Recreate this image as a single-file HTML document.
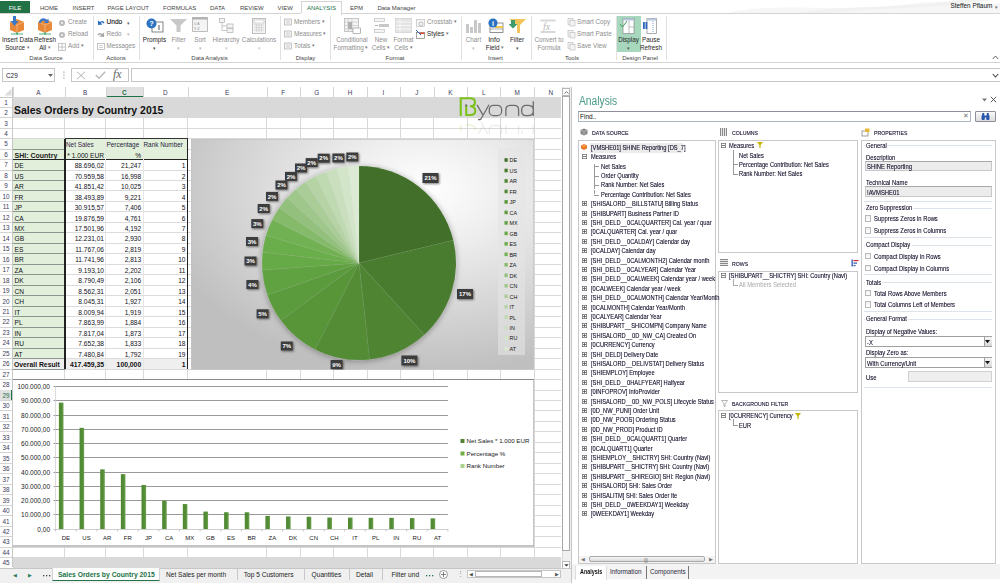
<!DOCTYPE html><html><head><meta charset="utf-8"><style>
*{margin:0;padding:0;box-sizing:border-box}
html,body{width:1000px;height:583px;overflow:hidden;background:#fff;font-family:"Liberation Sans",sans-serif;}
.t{position:absolute;white-space:nowrap;font-size:7px;line-height:8px;color:#222;}
</style></head><body>
<div style="position:absolute;left:0px;top:0px;width:1000px;height:14px;background:#fff"></div>
<svg style="position:absolute;left:600px;top:0" width="400" height="14"><path d="M130 12 C180 2 240 13 300 5 S360 10 400 3 L400 13 L130 13Z" fill="#f6f6f6"/><path d="M200 13 C240 5 300 9 360 0 L390 0 C330 10 270 7 230 13Z" fill="#f1f1f1"/></svg>
<div style="position:absolute;left:0px;top:1px;width:30px;height:13px;background:#217346"></div>
<div class="t" style="left:0px;top:3.5px;width:30px;text-align:center;color:#fff;font-size:6px;">FILE</div>
<div class="t" style="left:40px;top:3.5px;color:#444;font-size:6px;">HOME</div>
<div class="t" style="left:72.5px;top:3.5px;color:#444;font-size:6px;">INSERT</div>
<div class="t" style="left:107.5px;top:3.5px;color:#444;font-size:6px;">PAGE LAYOUT</div>
<div class="t" style="left:163px;top:3.5px;color:#444;font-size:6px;">FORMULAS</div>
<div class="t" style="left:210px;top:3.5px;color:#444;font-size:6px;">DATA</div>
<div class="t" style="left:240px;top:3.5px;color:#444;font-size:6px;">REVIEW</div>
<div class="t" style="left:277.5px;top:3.5px;color:#444;font-size:6px;">VIEW</div>
<div class="t" style="left:307px;top:3.5px;color:#217346;font-size:6px;">ANALYSIS</div>
<div class="t" style="left:350px;top:3.5px;color:#444;font-size:6px;">EPM</div>
<div class="t" style="left:377.5px;top:3.5px;color:#444;font-size:6px;">Data Manager</div>
<div style="position:absolute;left:300.5px;top:1px;width:41px;height:14px;border:1px solid #d4d4d4;border-bottom:none;background:#fff"></div>
<div class="t" style="left:307px;top:3.5px;color:#217346;font-size:6px;">ANALYSIS</div>
<div class="t" style="left:950.5px;top:2.2px;color:#111;font-size:6.4px;">Steffen Pflaum</div>
<div class="t" style="left:995px;top:2.5px;color:#666;font-size:5px;">&#9662;</div>
<div style="position:absolute;left:0px;top:13.3px;width:1000px;height:0.8px;background:#d4d4d4"></div>
<div style="position:absolute;left:301.3px;top:13px;width:39.5px;height:1.5px;background:#fff"></div>
<div style="position:absolute;left:0px;top:62px;width:1000px;height:1px;background:#d4d4d4"></div>
<div style="position:absolute;left:92.5px;top:16px;width:0.7px;height:44px;background:#e1e1e1"></div>
<div style="position:absolute;left:139.3px;top:16px;width:0.7px;height:44px;background:#e1e1e1"></div>
<div style="position:absolute;left:279.5px;top:16px;width:0.7px;height:44px;background:#e1e1e1"></div>
<div style="position:absolute;left:330.4px;top:16px;width:0.7px;height:44px;background:#e1e1e1"></div>
<div style="position:absolute;left:460.6px;top:16px;width:0.7px;height:44px;background:#e1e1e1"></div>
<div style="position:absolute;left:530.7px;top:16px;width:0.7px;height:44px;background:#e1e1e1"></div>
<div style="position:absolute;left:615.5px;top:16px;width:0.7px;height:44px;background:#e1e1e1"></div>
<div style="position:absolute;left:665.7px;top:16px;width:0.7px;height:44px;background:#e1e1e1"></div>
<div class="t" style="left:6px;top:54.3px;width:80px;text-align:center;font-size:6px;color:#444;">Data Source</div>
<div class="t" style="left:76px;top:54.3px;width:80px;text-align:center;font-size:6px;color:#444;">Actions</div>
<div class="t" style="left:169.5px;top:54.3px;width:80px;text-align:center;font-size:6px;color:#444;">Data Analysis</div>
<div class="t" style="left:265.5px;top:54.3px;width:80px;text-align:center;font-size:6px;color:#444;">Display</div>
<div class="t" style="left:355px;top:54.3px;width:80px;text-align:center;font-size:6px;color:#444;">Format</div>
<div class="t" style="left:455.5px;top:54.3px;width:80px;text-align:center;font-size:6px;color:#444;">Insert</div>
<div class="t" style="left:532px;top:54.3px;width:80px;text-align:center;font-size:6px;color:#444;">Tools</div>
<div class="t" style="left:600px;top:54.3px;width:80px;text-align:center;font-size:6px;color:#444;">Design Panel</div>
<svg style="position:absolute;left:8.5px;top:16px" width="16" height="19" viewBox="0 0 16 19"><path d="M8 3 L15 6 L15 14 L8 17 L1 14 L1 6Z" fill="#e8893a"/><path d="M1 6 L8 9 L15 6 M8 9 L8 17" stroke="#f7c89a" stroke-width="0.6" fill="none"/><rect x="2" y="17.5" width="12" height="1" fill="#4caf80"/><rect x="7" y="16.5" width="2" height="2" fill="#4caf80"/><path d="M4 0 L7 0 L7 5 L9.5 5 L5.5 10 L1.5 5 L4 5Z" fill="#3a78c8"/></svg>
<svg style="position:absolute;left:36.5px;top:16px" width="16" height="19" viewBox="0 0 16 19"><path d="M8 3 L15 6 L15 14 L8 17 L1 14 L1 6Z" fill="#e8893a"/><path d="M1 6 L8 9 L15 6 M8 9 L8 17" stroke="#f7c89a" stroke-width="0.6" fill="none"/><rect x="2" y="17.5" width="12" height="1" fill="#4caf80"/><rect x="7" y="16.5" width="2" height="2" fill="#4caf80"/><path d="M2 7 A4.5 4.5 0 0 1 10 4 L11.5 2.5 L11.5 7 L7 7 L8.5 5.5 A3 3 0 0 0 3.5 7.5Z" fill="#3a78c8"/></svg>
<div class="t" style="left:-22.5px;top:35.7px;width:80px;text-align:center;font-size:6.3px;color:#262626;">Insert Data</div>
<div class="t" style="left:-22.5px;top:43.7px;width:80px;text-align:center;font-size:6.3px;color:#262626;">Source <span style="font-size:4.5px;color:#777;vertical-align:1px">&#9662;</span></div>
<div class="t" style="left:5px;top:35.7px;width:80px;text-align:center;font-size:6.3px;color:#262626;">Refresh</div>
<div class="t" style="left:5px;top:43.7px;width:80px;text-align:center;font-size:6.3px;color:#262626;">All <span style="font-size:4.5px;color:#777;vertical-align:1px">&#9662;</span></div>
<svg style="position:absolute;left:58px;top:18.5px" width="8" height="8" viewBox="0 0 8 8"><circle cx="4" cy="4" r="3" fill="#b8b8b8"/><circle cx="4" cy="4" r="1.2" fill="#e8e8e8"/></svg>
<div class="t" style="left:68px;top:18px;font-size:6.3px;color:#8e8e8e;">Create</div>
<svg style="position:absolute;left:58px;top:30.5px" width="8" height="8" viewBox="0 0 8 8"><circle cx="4" cy="4" r="3" fill="#b8b8b8"/><circle cx="4" cy="4" r="1.2" fill="#e8e8e8"/></svg>
<div class="t" style="left:68px;top:30px;font-size:6.3px;color:#8e8e8e;">Reload</div>
<svg style="position:absolute;left:58px;top:42.5px" width="8" height="8" viewBox="0 0 8 8"><rect x="0.5" y="0.5" width="7" height="7" fill="none" stroke="#b8b8b8" stroke-width="0.8"/><path d="M4 1 V7 M1 4 H7" stroke="#b8b8b8" stroke-width="0.8"/></svg>
<div class="t" style="left:68px;top:42px;font-size:6.3px;color:#8e8e8e;">Add <span style="font-size:4.5px;color:#777;vertical-align:1px">&#9662;</span></div>
<svg style="position:absolute;left:97px;top:19px" width="8" height="7" viewBox="0 0 8 7"><path d="M1 6 L1 1.5 L3 3 C5 1 7 2 7.5 4 L6 4.5 C5.5 3 4.5 3 4 4 L5.5 5.5Z" fill="#2a6ec0"/></svg>
<div class="t" style="left:106.5px;top:18px;font-size:6.6px;color:#111;-webkit-text-stroke:0.1px #111;">Undo</div>
<div class="t" style="left:127px;top:18.5px;font-size:5px;color:#666;">&#9662;</div>
<svg style="position:absolute;left:97px;top:31px" width="8" height="7" viewBox="0 0 8 7"><path d="M7 6 L7 1.5 L5 3 C3 1 1 2 0.5 4 L2 4.5 C2.5 3 3.5 3 4 4 L2.5 5.5Z" fill="#a8a8a8"/></svg>
<div class="t" style="left:106.5px;top:30px;font-size:6.3px;color:#8e8e8e;">Redo</div>
<div class="t" style="left:126.5px;top:30px;font-size:5px;color:#bbb;">&#9662;</div>
<svg style="position:absolute;left:97px;top:42.5px" width="8" height="8" viewBox="0 0 8 8"><rect x="0.5" y="0.5" width="7" height="6" fill="none" stroke="#b8b8b8" stroke-width="0.8"/><path d="M2 2.5 H6 M2 4.5 H6" stroke="#b8b8b8" stroke-width="0.6"/></svg>
<div class="t" style="left:106.5px;top:42px;font-size:6.3px;color:#8e8e8e;">Messages</div>
<svg style="position:absolute;left:146px;top:17.5px" width="18" height="15" viewBox="0 0 18 15"><rect x="6" y="4" width="11" height="10" fill="#fff" stroke="#666" stroke-width="0.8"/><path d="M13 7 V12" stroke="#555" stroke-width="1"/><circle cx="5.5" cy="5.5" r="5" fill="#2b73c2"/><text x="5.5" y="8.2" text-anchor="middle" font-family="Liberation Sans" font-weight="bold" font-size="7.5" fill="#fff">?</text></svg>
<div class="t" style="left:114.5px;top:35.7px;width:80px;text-align:center;font-size:6.3px;color:#262626;">Prompts</div>
<div class="t" style="left:114.5px;top:43.7px;width:80px;text-align:center;font-size:5px;color:#555;">&#9662;</div>
<svg style="position:absolute;left:170px;top:19px" width="17" height="13" viewBox="0 0 17 13"><path d="M0 0 H17 L10.5 6.5 V13 H6.5 V6.5Z" fill="#c8c8c8"/></svg>
<div class="t" style="left:138.5px;top:35.7px;width:80px;text-align:center;font-size:6.3px;color:#8e8e8e;">Filter</div>
<div class="t" style="left:138.5px;top:43.7px;width:80px;text-align:center;font-size:5px;color:#bbb;">&#9662;</div>
<svg style="position:absolute;left:192px;top:17px" width="16" height="15" viewBox="0 0 16 15"><rect x="0.5" y="0.5" width="15" height="14" fill="#f4f4f4" stroke="#b0b0b0" stroke-width="0.8"/><rect x="0.5" y="0.5" width="15" height="2" fill="#b0b0b0"/><text x="2" y="8" font-family="Liberation Sans" font-size="4" fill="#999">0 A</text><text x="2" y="13" font-family="Liberation Sans" font-size="4" fill="#999">9 Z</text></svg>
<div class="t" style="left:160px;top:35.7px;width:80px;text-align:center;font-size:6.3px;color:#8e8e8e;">Sort</div>
<div class="t" style="left:160px;top:43.7px;width:80px;text-align:center;font-size:5px;color:#bbb;">&#9662;</div>
<svg style="position:absolute;left:219px;top:17.5px" width="15" height="15" viewBox="0 0 15 15"><rect x="0.5" y="0.5" width="5" height="4" fill="#f4f4f4" stroke="#b0b0b0" stroke-width="0.7"/><rect x="8" y="6" width="6" height="4" fill="#f4f4f4" stroke="#b0b0b0" stroke-width="0.7"/><rect x="8" y="10.5" width="6" height="4" fill="#f4f4f4" stroke="#b0b0b0" stroke-width="0.7"/><path d="M3 4.5 V12.5 H8 M3 8 H8" stroke="#b0b0b0" stroke-width="0.7" fill="none"/></svg>
<div class="t" style="left:186px;top:35.7px;width:80px;text-align:center;font-size:6.3px;color:#8e8e8e;">Hierarchy</div>
<div class="t" style="left:186px;top:43.7px;width:80px;text-align:center;font-size:5px;color:#ccc;">&#9662;</div>
<svg style="position:absolute;left:252px;top:17.5px" width="14" height="16" viewBox="0 0 14 16"><rect x="0.5" y="0.5" width="13" height="15" fill="#f4f4f4" stroke="#b0b0b0" stroke-width="0.8"/><rect x="2" y="2" width="10" height="3" fill="#fff" stroke="#b0b0b0" stroke-width="0.5"/><path d="M2 7 H12 M2 9.5 H12 M2 12 H12 M4.5 6 V14 M7 6 V14 M9.5 6 V14" stroke="#c8c8c8" stroke-width="0.6"/></svg>
<div class="t" style="left:219px;top:35.7px;width:80px;text-align:center;font-size:6.3px;color:#8e8e8e;">Calculations</div>
<div class="t" style="left:219px;top:43.7px;width:80px;text-align:center;font-size:5px;color:#ccc;">&#9662;</div>
<svg style="position:absolute;left:284px;top:18px" width="8" height="8" viewBox="0 0 8 8"><rect x="0.5" y="1" width="7" height="6" fill="#f4f4f4" stroke="#b0b0b0" stroke-width="0.7"/><path d="M2 3 H6 M2 5 H6" stroke="#b8b8b8" stroke-width="0.6"/></svg>
<div class="t" style="left:294px;top:18px;font-size:6.3px;color:#8e8e8e;">Members <span style="font-size:4.5px;color:#777;vertical-align:1px">&#9662;</span></div>
<svg style="position:absolute;left:284px;top:30px" width="8" height="8" viewBox="0 0 8 8"><rect x="0.5" y="1" width="7" height="6" fill="#f4f4f4" stroke="#b0b0b0" stroke-width="0.7"/><path d="M2 3 H6 M2 5 H6" stroke="#b8b8b8" stroke-width="0.6"/></svg>
<div class="t" style="left:294px;top:30px;font-size:6.3px;color:#8e8e8e;">Measures <span style="font-size:4.5px;color:#777;vertical-align:1px">&#9662;</span></div>
<svg style="position:absolute;left:284px;top:42px" width="8" height="8" viewBox="0 0 8 8"><rect x="0.5" y="1" width="7" height="6" fill="#f4f4f4" stroke="#b0b0b0" stroke-width="0.7"/><path d="M2 3 H6 M2 5 H6" stroke="#b8b8b8" stroke-width="0.6"/></svg>
<div class="t" style="left:294px;top:42px;font-size:6.3px;color:#8e8e8e;">Totals <span style="font-size:4.5px;color:#777;vertical-align:1px">&#9662;</span></div>
<svg style="position:absolute;left:344px;top:17.5px" width="17" height="16" viewBox="0 0 17 16"><rect x="0.5" y="0.5" width="14" height="13" fill="#f4f4f4" stroke="#b0b0b0" stroke-width="0.7"/><path d="M0.5 4 H14.5 M0.5 7.5 H14.5 M0.5 11 H14.5 M4 0.5 V13.5 M8 0.5 V13.5" stroke="#c0c0c0" stroke-width="0.6"/><rect x="4" y="4" width="4" height="7" fill="#b0b0b0"/><rect x="9" y="10" width="7.5" height="5.5" fill="#fff" stroke="#999" stroke-width="0.7"/></svg>
<div class="t" style="left:312px;top:35.7px;width:80px;text-align:center;font-size:6.3px;color:#8e8e8e;">Conditional</div>
<div class="t" style="left:311px;top:43.7px;width:80px;text-align:center;font-size:6.3px;color:#8e8e8e;">Formatting <span style="font-size:4.5px;color:#777;vertical-align:1px">&#9662;</span></div>
<svg style="position:absolute;left:374px;top:18px" width="15" height="15" viewBox="0 0 15 15"><rect x="0.5" y="0.5" width="10" height="3" fill="#f4f4f4" stroke="#b8b8b8" stroke-width="0.6"/><rect x="5" y="6" width="10" height="3" fill="#c8c8c8"/><rect x="0.5" y="11.5" width="10" height="3" fill="#f4f4f4" stroke="#b8b8b8" stroke-width="0.6"/><path d="M1 7.5 H4" stroke="#999" stroke-width="0.8"/></svg>
<div class="t" style="left:341px;top:35.7px;width:80px;text-align:center;font-size:6.3px;color:#8e8e8e;">New</div>
<div class="t" style="left:341px;top:43.7px;width:80px;text-align:center;font-size:6.3px;color:#8e8e8e;">Cells <span style="font-size:4.5px;color:#777;vertical-align:1px">&#9662;</span></div>
<svg style="position:absolute;left:395px;top:18px" width="17" height="15" viewBox="0 0 17 15"><rect x="0.5" y="0.5" width="16" height="14" fill="#e4e4e4" stroke="#c8c8c8" stroke-width="0.6"/><path d="M0.5 4 H16.5 M0.5 7.5 H16.5 M0.5 11 H16.5 M5 0.5 V14.5" stroke="#fafafa" stroke-width="0.8"/></svg>
<div class="t" style="left:363.5px;top:35.7px;width:80px;text-align:center;font-size:6.3px;color:#8e8e8e;">Format</div>
<div class="t" style="left:363.5px;top:43.7px;width:80px;text-align:center;font-size:6.3px;color:#8e8e8e;">Cells <span style="font-size:4.5px;color:#777;vertical-align:1px">&#9662;</span></div>
<svg style="position:absolute;left:416px;top:18.5px" width="9" height="8" viewBox="0 0 9 8"><rect x="0.5" y="0.5" width="8" height="7" fill="#f4f4f4" stroke="#b8b8b8" stroke-width="0.6"/><circle cx="5" cy="5" r="2" fill="none" stroke="#aaa" stroke-width="0.7"/></svg>
<div class="t" style="left:427px;top:18px;font-size:6.3px;color:#8e8e8e;">Crosstab <span style="font-size:4.5px;color:#777;vertical-align:1px">&#9662;</span></div>
<svg style="position:absolute;left:416px;top:29.5px" width="9" height="9" viewBox="0 0 9 9"><rect x="0.5" y="2.5" width="8" height="6" fill="#fff" stroke="#666" stroke-width="0.6"/><path d="M0 0 L5 5" stroke="#2a56b0" stroke-width="1"/><rect x="4" y="2.5" width="4.5" height="1.5" fill="#e05030"/></svg>
<div class="t" style="left:427px;top:30px;font-size:6.3px;color:#262626;">Styles <span style="font-size:4.5px;color:#777;vertical-align:1px">&#9662;</span></div>
<svg style="position:absolute;left:466px;top:18px" width="16" height="15" viewBox="0 0 16 15"><rect x="0" y="6" width="3" height="9" fill="#c8c8c8"/><rect x="4" y="9" width="3" height="6" fill="#c8c8c8"/><rect x="8" y="2" width="3" height="13" fill="#c8c8c8"/><rect x="12" y="5" width="3" height="10" fill="#c8c8c8"/></svg>
<div class="t" style="left:433.5px;top:35.7px;width:80px;text-align:center;font-size:6.3px;color:#8e8e8e;">Chart</div>
<div class="t" style="left:433.5px;top:43.7px;width:80px;text-align:center;font-size:5px;color:#bbb;">&#9662;</div>
<svg style="position:absolute;left:488px;top:17.5px" width="16" height="15" viewBox="0 0 16 15"><rect x="2" y="5" width="13" height="9.5" fill="#fff" stroke="#777" stroke-width="0.8"/><rect x="7" y="8" width="8" height="2" fill="#f0c850"/><path d="M2 11 H15" stroke="#777" stroke-width="0.6"/><circle cx="5" cy="5" r="4.6" fill="#2b73c2"/><text x="5" y="7.6" text-anchor="middle" font-family="Liberation Sans" font-weight="bold" font-size="7" fill="#fff">i</text></svg>
<div class="t" style="left:454px;top:35.7px;width:80px;text-align:center;font-size:7px;color:#262626;">Info</div>
<div class="t" style="left:455px;top:43.7px;width:80px;text-align:center;font-size:6.3px;color:#262626;">Field <span style="font-size:4.5px;color:#777;vertical-align:1px">&#9662;</span></div>
<svg style="position:absolute;left:509px;top:19px" width="17" height="14" viewBox="0 0 17 14"><path d="M0 0 H17 L11 6 V14 H8 V6Z" fill="#f2c45a"/><path d="M2 1 H6 V5 H8.5 L4 9.5 L-0.5 5 H2Z" fill="#3e9b6a"/></svg>
<div class="t" style="left:477px;top:35.7px;width:80px;text-align:center;font-size:6.3px;color:#262626;">Filter</div>
<div class="t" style="left:477px;top:43.7px;width:80px;text-align:center;font-size:5px;color:#555;">&#9662;</div>
<svg style="position:absolute;left:540px;top:17.5px" width="16" height="16" viewBox="0 0 16 16"><rect x="0.5" y="1.5" width="15" height="2" fill="#d8d8d8"/><text x="3" y="12" font-family="Liberation Serif" font-style="italic" font-size="10" fill="#b8b8b8">fx</text><rect x="0.5" y="13" width="15" height="2" fill="#d8d8d8"/></svg>
<div class="t" style="left:509px;top:35.7px;width:80px;text-align:center;font-size:6.3px;color:#8e8e8e;">Convert to</div>
<div class="t" style="left:509px;top:43.7px;width:80px;text-align:center;font-size:6.3px;color:#8e8e8e;">Formula</div>
<svg style="position:absolute;left:567px;top:18px" width="9" height="9" viewBox="0 0 9 9"><rect x="1" y="0.5" width="5" height="6" fill="#f4f4f4" stroke="#b8b8b8" stroke-width="0.6"/><rect x="3" y="2.5" width="5" height="5.5" fill="#f4f4f4" stroke="#b8b8b8" stroke-width="0.6"/></svg>
<div class="t" style="left:577px;top:18px;font-size:6.3px;color:#8e8e8e;">Smart Copy</div>
<svg style="position:absolute;left:567px;top:30px" width="9" height="9" viewBox="0 0 9 9"><rect x="1" y="0.5" width="5" height="6" fill="#f4f4f4" stroke="#b8b8b8" stroke-width="0.6"/><rect x="3" y="2.5" width="5" height="5.5" fill="#f4f4f4" stroke="#b8b8b8" stroke-width="0.6"/></svg>
<div class="t" style="left:577px;top:30px;font-size:6.3px;color:#8e8e8e;">Smart Paste</div>
<svg style="position:absolute;left:567px;top:42px" width="9" height="9" viewBox="0 0 9 9"><rect x="1" y="0.5" width="5" height="6" fill="#f4f4f4" stroke="#b8b8b8" stroke-width="0.6"/><rect x="3" y="2.5" width="5" height="5.5" fill="#f4f4f4" stroke="#b8b8b8" stroke-width="0.6"/></svg>
<div class="t" style="left:577px;top:42px;font-size:6.3px;color:#8e8e8e;">Save View</div>
<div style="position:absolute;left:617px;top:15.7px;width:23.5px;height:36px;background:#a7d8bd"></div>
<svg style="position:absolute;left:620px;top:17.5px" width="15" height="16" viewBox="0 0 15 16"><rect x="3" y="0.5" width="11" height="15" fill="#fff" stroke="#888" stroke-width="0.7"/><rect x="3" y="0.5" width="11" height="2" fill="#b8c8e0"/><path d="M9 2.5 V15.5 M9 9 H14" stroke="#999" stroke-width="0.6"/><path d="M0 6 L2.5 9 L7 3" stroke="#3a9a5a" stroke-width="1" fill="none"/></svg>
<div class="t" style="left:588.5px;top:35.7px;width:80px;text-align:center;font-size:6.3px;color:#262626;">Display</div>
<div class="t" style="left:588.5px;top:43.7px;width:80px;text-align:center;font-size:5px;color:#555;">&#9662;</div>
<svg style="position:absolute;left:643px;top:17.5px" width="14" height="16" viewBox="0 0 14 16"><rect x="4" y="0.5" width="9.5" height="15" fill="#fff" stroke="#888" stroke-width="0.7"/><rect x="4" y="0.5" width="9.5" height="2" fill="#b8c8e0"/><rect x="0" y="4" width="1.8" height="7" fill="#2a66c0"/><rect x="2.5" y="4" width="1.8" height="7" fill="#2a66c0"/><path d="M10 3 V14" stroke="#2a66c0" stroke-width="0.6" stroke-dasharray="1 1"/></svg>
<div class="t" style="left:611px;top:35.7px;width:80px;text-align:center;font-size:6.3px;color:#262626;">Pause</div>
<div class="t" style="left:611px;top:43.7px;width:80px;text-align:center;font-size:6.3px;color:#262626;">Refresh</div>
<svg style="position:absolute;left:992px;top:55px" width="7" height="5" viewBox="0 0 7 5"><path d="M0.8 4 L3.5 1 L6.2 4" stroke="#555" stroke-width="0.9" fill="none"/></svg>
<div style="position:absolute;left:0px;top:63px;width:1000px;height:24px;background:#fff"></div>
<div style="position:absolute;left:2px;top:68px;width:53px;height:14px;border:1px solid #c6c6c6;background:#fff"></div>
<div class="t" style="left:6px;top:71.5px;color:#223;font-size:6.4px;">C29</div>
<svg style="position:absolute;left:47.5px;top:74px" width="5" height="3" viewBox="0 0 5 3"><path d="M0 0 H5 L2.5 3Z" fill="#666"/></svg>
<svg style="position:absolute;left:62.5px;top:71px" width="2" height="8" viewBox="0 0 2 8"><rect x="0.3" y="0.5" width="1.2" height="1.2" fill="#999"/><rect x="0.3" y="3.4" width="1.2" height="1.2" fill="#999"/><rect x="0.3" y="6.3" width="1.2" height="1.2" fill="#999"/></svg>
<div style="position:absolute;left:71px;top:68px;width:58px;height:14px;border:1px solid #c6c6c6;background:#fff"></div>
<svg style="position:absolute;left:75.5px;top:70.5px" width="10" height="9" viewBox="0 0 10 9"><path d="M1 0.8 L9 8.2 M9 0.8 L1 8.2" stroke="#b0b0b0" stroke-width="1"/></svg>
<svg style="position:absolute;left:94.5px;top:70.5px" width="11" height="8" viewBox="0 0 11 8"><path d="M0.8 4 L4 7.2 L10.2 0.8" stroke="#b8b8b8" stroke-width="1.4" fill="none"/></svg>
<div class="t" style="left:113px;top:68px;font-family:'Liberation Serif',serif;font-style:italic;font-size:12px;line-height:13px;color:#666;">fx</div>
<div style="position:absolute;left:130.5px;top:68px;width:875px;height:14px;border:1px solid #c6c6c6;background:#fff"></div>
<svg style="position:absolute;left:992px;top:73px" width="7" height="5" viewBox="0 0 7 5"><path d="M0.8 1 L3.5 4 L6.2 1" stroke="#444" stroke-width="1.1" fill="none"/></svg>
<div style="position:absolute;left:0px;top:87px;width:560.5px;height:10px;background:#fff"></div>
<div class="t" style="left:12.5px;top:88.8px;width:52.0px;text-align:center;color:#3a3a5a;font-size:6.4px;">A</div>
<div style="position:absolute;left:12.5px;top:87px;width:1px;height:10px;background:#d4d4d4"></div>
<div class="t" style="left:64.5px;top:88.8px;width:41.2px;text-align:center;color:#3a3a5a;font-size:6.4px;">B</div>
<div style="position:absolute;left:64.5px;top:87px;width:1px;height:10px;background:#d4d4d4"></div>
<div style="position:absolute;left:105.7px;top:87px;width:37.3px;height:10px;background:#e1e1e1;border-bottom:1px solid #217346"></div>
<div class="t" style="left:105.7px;top:88.8px;width:37.3px;text-align:center;color:#217346;font-size:6.4px;font-weight:bold;">C</div>
<div style="position:absolute;left:105.7px;top:87px;width:1px;height:10px;background:#d4d4d4"></div>
<div class="t" style="left:143px;top:88.8px;width:44.5px;text-align:center;color:#3a3a5a;font-size:6.4px;">D</div>
<div style="position:absolute;left:143px;top:87px;width:1px;height:10px;background:#d4d4d4"></div>
<div class="t" style="left:187.5px;top:88.8px;width:79.10000000000002px;text-align:center;color:#3a3a5a;font-size:6.4px;">E</div>
<div style="position:absolute;left:187.5px;top:87px;width:1px;height:10px;background:#d4d4d4"></div>
<div class="t" style="left:266.6px;top:88.8px;width:33.39999999999998px;text-align:center;color:#3a3a5a;font-size:6.4px;">F</div>
<div style="position:absolute;left:266.6px;top:87px;width:1px;height:10px;background:#d4d4d4"></div>
<div class="t" style="left:300px;top:88.8px;width:33.39999999999998px;text-align:center;color:#3a3a5a;font-size:6.4px;">G</div>
<div style="position:absolute;left:300px;top:87px;width:1px;height:10px;background:#d4d4d4"></div>
<div class="t" style="left:333.4px;top:88.8px;width:33.400000000000034px;text-align:center;color:#3a3a5a;font-size:6.4px;">H</div>
<div style="position:absolute;left:333.4px;top:87px;width:1px;height:10px;background:#d4d4d4"></div>
<div class="t" style="left:366.8px;top:88.8px;width:33.39999999999998px;text-align:center;color:#3a3a5a;font-size:6.4px;">I</div>
<div style="position:absolute;left:366.8px;top:87px;width:1px;height:10px;background:#d4d4d4"></div>
<div class="t" style="left:400.2px;top:88.8px;width:33.400000000000034px;text-align:center;color:#3a3a5a;font-size:6.4px;">J</div>
<div style="position:absolute;left:400.2px;top:87px;width:1px;height:10px;background:#d4d4d4"></div>
<div class="t" style="left:433.6px;top:88.8px;width:33.39999999999998px;text-align:center;color:#3a3a5a;font-size:6.4px;">K</div>
<div style="position:absolute;left:433.6px;top:87px;width:1px;height:10px;background:#d4d4d4"></div>
<div class="t" style="left:467px;top:88.8px;width:33.39999999999998px;text-align:center;color:#3a3a5a;font-size:6.4px;">L</div>
<div style="position:absolute;left:467px;top:87px;width:1px;height:10px;background:#d4d4d4"></div>
<div class="t" style="left:500.4px;top:88.8px;width:33.39999999999998px;text-align:center;color:#3a3a5a;font-size:6.4px;">M</div>
<div style="position:absolute;left:500.4px;top:87px;width:1px;height:10px;background:#d4d4d4"></div>
<div class="t" style="left:533.8px;top:88.8px;width:34.200000000000045px;text-align:center;color:#3a3a5a;font-size:6.4px;">N</div>
<div style="position:absolute;left:533.8px;top:87px;width:1px;height:10px;background:#d4d4d4"></div>
<div style="position:absolute;left:0px;top:96.5px;width:560.5px;height:0.7px;background:#c8c8c8"></div>
<svg style="position:absolute;left:4px;top:88px" width="8" height="8" viewBox="0 0 8 8"><path d="M7.5 0.5 L7.5 7.5 L0.5 7.5Z" fill="#dcdcdc"/></svg>
<div class="t" style="left:0px;top:98.6px;width:12px;text-align:center;color:#3a3a5a;font-size:6.4px;">1</div>
<div style="position:absolute;left:0px;top:106.75px;width:12.5px;height:0.6px;background:#d4d4d4"></div>
<div class="t" style="left:0px;top:109.05px;width:12px;text-align:center;color:#3a3a5a;font-size:6.4px;">2</div>
<div style="position:absolute;left:0px;top:117.19999999999999px;width:12.5px;height:0.6px;background:#d4d4d4"></div>
<div class="t" style="left:0px;top:119.49999999999999px;width:12px;text-align:center;color:#3a3a5a;font-size:6.4px;">3</div>
<div style="position:absolute;left:0px;top:127.65px;width:12.5px;height:0.6px;background:#d4d4d4"></div>
<div class="t" style="left:0px;top:129.95000000000002px;width:12px;text-align:center;color:#3a3a5a;font-size:6.4px;">4</div>
<div style="position:absolute;left:0px;top:138.1px;width:12.5px;height:0.6px;background:#d4d4d4"></div>
<div class="t" style="left:0px;top:140.4px;width:12px;text-align:center;color:#3a3a5a;font-size:6.4px;">5</div>
<div style="position:absolute;left:0px;top:148.575px;width:12.5px;height:0.6px;background:#d4d4d4"></div>
<div class="t" style="left:0px;top:150.875px;width:12px;text-align:center;color:#3a3a5a;font-size:6.4px;">6</div>
<div style="position:absolute;left:0px;top:159.04999999999998px;width:12.5px;height:0.6px;background:#d4d4d4"></div>
<div class="t" style="left:0px;top:161.35px;width:12px;text-align:center;color:#3a3a5a;font-size:6.4px;">7</div>
<div style="position:absolute;left:0px;top:169.52499999999998px;width:12.5px;height:0.6px;background:#d4d4d4"></div>
<div class="t" style="left:0px;top:171.825px;width:12px;text-align:center;color:#3a3a5a;font-size:6.4px;">8</div>
<div style="position:absolute;left:0px;top:180.0px;width:12.5px;height:0.6px;background:#d4d4d4"></div>
<div class="t" style="left:0px;top:182.3px;width:12px;text-align:center;color:#3a3a5a;font-size:6.4px;">9</div>
<div style="position:absolute;left:0px;top:190.475px;width:12.5px;height:0.6px;background:#d4d4d4"></div>
<div class="t" style="left:0px;top:192.775px;width:12px;text-align:center;color:#3a3a5a;font-size:6.4px;">10</div>
<div style="position:absolute;left:0px;top:200.95px;width:12.5px;height:0.6px;background:#d4d4d4"></div>
<div class="t" style="left:0px;top:203.25px;width:12px;text-align:center;color:#3a3a5a;font-size:6.4px;">11</div>
<div style="position:absolute;left:0px;top:211.425px;width:12.5px;height:0.6px;background:#d4d4d4"></div>
<div class="t" style="left:0px;top:213.72500000000002px;width:12px;text-align:center;color:#3a3a5a;font-size:6.4px;">12</div>
<div style="position:absolute;left:0px;top:221.89999999999998px;width:12.5px;height:0.6px;background:#d4d4d4"></div>
<div class="t" style="left:0px;top:224.2px;width:12px;text-align:center;color:#3a3a5a;font-size:6.4px;">13</div>
<div style="position:absolute;left:0px;top:232.375px;width:12.5px;height:0.6px;background:#d4d4d4"></div>
<div class="t" style="left:0px;top:234.675px;width:12px;text-align:center;color:#3a3a5a;font-size:6.4px;">14</div>
<div style="position:absolute;left:0px;top:242.85px;width:12.5px;height:0.6px;background:#d4d4d4"></div>
<div class="t" style="left:0px;top:245.15px;width:12px;text-align:center;color:#3a3a5a;font-size:6.4px;">15</div>
<div style="position:absolute;left:0px;top:253.325px;width:12.5px;height:0.6px;background:#d4d4d4"></div>
<div class="t" style="left:0px;top:255.625px;width:12px;text-align:center;color:#3a3a5a;font-size:6.4px;">16</div>
<div style="position:absolute;left:0px;top:263.79999999999995px;width:12.5px;height:0.6px;background:#d4d4d4"></div>
<div class="t" style="left:0px;top:266.09999999999997px;width:12px;text-align:center;color:#3a3a5a;font-size:6.4px;">17</div>
<div style="position:absolute;left:0px;top:274.275px;width:12.5px;height:0.6px;background:#d4d4d4"></div>
<div class="t" style="left:0px;top:276.575px;width:12px;text-align:center;color:#3a3a5a;font-size:6.4px;">18</div>
<div style="position:absolute;left:0px;top:284.75px;width:12.5px;height:0.6px;background:#d4d4d4"></div>
<div class="t" style="left:0px;top:287.05px;width:12px;text-align:center;color:#3a3a5a;font-size:6.4px;">19</div>
<div style="position:absolute;left:0px;top:295.225px;width:12.5px;height:0.6px;background:#d4d4d4"></div>
<div class="t" style="left:0px;top:297.52500000000003px;width:12px;text-align:center;color:#3a3a5a;font-size:6.4px;">20</div>
<div style="position:absolute;left:0px;top:305.7px;width:12.5px;height:0.6px;background:#d4d4d4"></div>
<div class="t" style="left:0px;top:308.0px;width:12px;text-align:center;color:#3a3a5a;font-size:6.4px;">21</div>
<div style="position:absolute;left:0px;top:316.17499999999995px;width:12.5px;height:0.6px;background:#d4d4d4"></div>
<div class="t" style="left:0px;top:318.47499999999997px;width:12px;text-align:center;color:#3a3a5a;font-size:6.4px;">22</div>
<div style="position:absolute;left:0px;top:326.65px;width:12.5px;height:0.6px;background:#d4d4d4"></div>
<div class="t" style="left:0px;top:328.95px;width:12px;text-align:center;color:#3a3a5a;font-size:6.4px;">23</div>
<div style="position:absolute;left:0px;top:337.125px;width:12.5px;height:0.6px;background:#d4d4d4"></div>
<div class="t" style="left:0px;top:339.425px;width:12px;text-align:center;color:#3a3a5a;font-size:6.4px;">24</div>
<div style="position:absolute;left:0px;top:347.6px;width:12.5px;height:0.6px;background:#d4d4d4"></div>
<div class="t" style="left:0px;top:349.90000000000003px;width:12px;text-align:center;color:#3a3a5a;font-size:6.4px;">25</div>
<div style="position:absolute;left:0px;top:358.075px;width:12.5px;height:0.6px;background:#d4d4d4"></div>
<div class="t" style="left:0px;top:360.375px;width:12px;text-align:center;color:#3a3a5a;font-size:6.4px;">26</div>
<div style="position:absolute;left:0px;top:368.54999999999995px;width:12.5px;height:0.6px;background:#d4d4d4"></div>
<div class="t" style="left:0px;top:370.84999999999997px;width:12px;text-align:center;color:#3a3a5a;font-size:6.4px;">27</div>
<div style="position:absolute;left:0px;top:379.025px;width:12.5px;height:0.6px;background:#d4d4d4"></div>
<div class="t" style="left:0px;top:381.325px;width:12px;text-align:center;color:#3a3a5a;font-size:6.4px;">28</div>
<div style="position:absolute;left:0px;top:389.5px;width:12.5px;height:0.6px;background:#d4d4d4"></div>
<div style="position:absolute;left:0px;top:390.0px;width:12px;height:10.44px;background:#e1e1e1;border-right:1px solid #217346"></div>
<div class="t" style="left:0px;top:391.8px;width:12px;text-align:center;color:#217346;font-size:6.4px;">29</div>
<div style="position:absolute;left:0px;top:399.975px;width:12.5px;height:0.6px;background:#d4d4d4"></div>
<div class="t" style="left:0px;top:402.27500000000003px;width:12px;text-align:center;color:#3a3a5a;font-size:6.4px;">30</div>
<div style="position:absolute;left:0px;top:410.44999999999993px;width:12.5px;height:0.6px;background:#d4d4d4"></div>
<div class="t" style="left:0px;top:412.74999999999994px;width:12px;text-align:center;color:#3a3a5a;font-size:6.4px;">31</div>
<div style="position:absolute;left:0px;top:420.92499999999995px;width:12.5px;height:0.6px;background:#d4d4d4"></div>
<div class="t" style="left:0px;top:423.22499999999997px;width:12px;text-align:center;color:#3a3a5a;font-size:6.4px;">32</div>
<div style="position:absolute;left:0px;top:431.4px;width:12.5px;height:0.6px;background:#d4d4d4"></div>
<div class="t" style="left:0px;top:433.7px;width:12px;text-align:center;color:#3a3a5a;font-size:6.4px;">33</div>
<div style="position:absolute;left:0px;top:441.875px;width:12.5px;height:0.6px;background:#d4d4d4"></div>
<div class="t" style="left:0px;top:444.175px;width:12px;text-align:center;color:#3a3a5a;font-size:6.4px;">34</div>
<div style="position:absolute;left:0px;top:452.35px;width:12.5px;height:0.6px;background:#d4d4d4"></div>
<div class="t" style="left:0px;top:454.65000000000003px;width:12px;text-align:center;color:#3a3a5a;font-size:6.4px;">35</div>
<div style="position:absolute;left:0px;top:462.82499999999993px;width:12.5px;height:0.6px;background:#d4d4d4"></div>
<div class="t" style="left:0px;top:465.12499999999994px;width:12px;text-align:center;color:#3a3a5a;font-size:6.4px;">36</div>
<div style="position:absolute;left:0px;top:473.29999999999995px;width:12.5px;height:0.6px;background:#d4d4d4"></div>
<div class="t" style="left:0px;top:475.59999999999997px;width:12px;text-align:center;color:#3a3a5a;font-size:6.4px;">37</div>
<div style="position:absolute;left:0px;top:483.775px;width:12.5px;height:0.6px;background:#d4d4d4"></div>
<div class="t" style="left:0px;top:486.075px;width:12px;text-align:center;color:#3a3a5a;font-size:6.4px;">38</div>
<div style="position:absolute;left:0px;top:494.25px;width:12.5px;height:0.6px;background:#d4d4d4"></div>
<div class="t" style="left:0px;top:496.55px;width:12px;text-align:center;color:#3a3a5a;font-size:6.4px;">39</div>
<div style="position:absolute;left:0px;top:504.725px;width:12.5px;height:0.6px;background:#d4d4d4"></div>
<div class="t" style="left:0px;top:507.02500000000003px;width:12px;text-align:center;color:#3a3a5a;font-size:6.4px;">40</div>
<div style="position:absolute;left:0px;top:515.1999999999999px;width:12.5px;height:0.6px;background:#d4d4d4"></div>
<div class="t" style="left:0px;top:517.4999999999999px;width:12px;text-align:center;color:#3a3a5a;font-size:6.4px;">41</div>
<div style="position:absolute;left:0px;top:525.675px;width:12.5px;height:0.6px;background:#d4d4d4"></div>
<div class="t" style="left:0px;top:527.9749999999999px;width:12px;text-align:center;color:#3a3a5a;font-size:6.4px;">42</div>
<div style="position:absolute;left:0px;top:536.15px;width:12.5px;height:0.6px;background:#d4d4d4"></div>
<div class="t" style="left:0px;top:538.4499999999999px;width:12px;text-align:center;color:#3a3a5a;font-size:6.4px;">43</div>
<div style="position:absolute;left:0px;top:546.625px;width:12.5px;height:0.6px;background:#d4d4d4"></div>
<div class="t" style="left:0px;top:548.925px;width:12px;text-align:center;color:#3a3a5a;font-size:6.4px;">44</div>
<div style="position:absolute;left:0px;top:557.1px;width:12.5px;height:0.6px;background:#d4d4d4"></div>
<div class="t" style="left:0px;top:559.4px;width:12px;text-align:center;color:#3a3a5a;font-size:6.4px;">45</div>
<div style="position:absolute;left:0px;top:567.5749999999999px;width:12.5px;height:0.6px;background:#d4d4d4"></div>
<div style="position:absolute;left:12px;top:87px;width:0.8px;height:480px;background:#c8c8c8"></div>
<div style="position:absolute;left:12.5px;top:106.75px;width:548.0px;height:0.7px;background:#d9d9d9"></div>
<div style="position:absolute;left:12.5px;top:117.19999999999999px;width:548.0px;height:0.7px;background:#d9d9d9"></div>
<div style="position:absolute;left:12.5px;top:127.65px;width:548.0px;height:0.7px;background:#d9d9d9"></div>
<div style="position:absolute;left:12.5px;top:138.1px;width:548.0px;height:0.7px;background:#d9d9d9"></div>
<div style="position:absolute;left:12.5px;top:148.575px;width:548.0px;height:0.7px;background:#d9d9d9"></div>
<div style="position:absolute;left:12.5px;top:159.04999999999998px;width:548.0px;height:0.7px;background:#d9d9d9"></div>
<div style="position:absolute;left:12.5px;top:169.52499999999998px;width:548.0px;height:0.7px;background:#d9d9d9"></div>
<div style="position:absolute;left:12.5px;top:180.0px;width:548.0px;height:0.7px;background:#d9d9d9"></div>
<div style="position:absolute;left:12.5px;top:190.475px;width:548.0px;height:0.7px;background:#d9d9d9"></div>
<div style="position:absolute;left:12.5px;top:200.95px;width:548.0px;height:0.7px;background:#d9d9d9"></div>
<div style="position:absolute;left:12.5px;top:211.425px;width:548.0px;height:0.7px;background:#d9d9d9"></div>
<div style="position:absolute;left:12.5px;top:221.89999999999998px;width:548.0px;height:0.7px;background:#d9d9d9"></div>
<div style="position:absolute;left:12.5px;top:232.375px;width:548.0px;height:0.7px;background:#d9d9d9"></div>
<div style="position:absolute;left:12.5px;top:242.85px;width:548.0px;height:0.7px;background:#d9d9d9"></div>
<div style="position:absolute;left:12.5px;top:253.325px;width:548.0px;height:0.7px;background:#d9d9d9"></div>
<div style="position:absolute;left:12.5px;top:263.79999999999995px;width:548.0px;height:0.7px;background:#d9d9d9"></div>
<div style="position:absolute;left:12.5px;top:274.275px;width:548.0px;height:0.7px;background:#d9d9d9"></div>
<div style="position:absolute;left:12.5px;top:284.75px;width:548.0px;height:0.7px;background:#d9d9d9"></div>
<div style="position:absolute;left:12.5px;top:295.225px;width:548.0px;height:0.7px;background:#d9d9d9"></div>
<div style="position:absolute;left:12.5px;top:305.7px;width:548.0px;height:0.7px;background:#d9d9d9"></div>
<div style="position:absolute;left:12.5px;top:316.17499999999995px;width:548.0px;height:0.7px;background:#d9d9d9"></div>
<div style="position:absolute;left:12.5px;top:326.65px;width:548.0px;height:0.7px;background:#d9d9d9"></div>
<div style="position:absolute;left:12.5px;top:337.125px;width:548.0px;height:0.7px;background:#d9d9d9"></div>
<div style="position:absolute;left:12.5px;top:347.6px;width:548.0px;height:0.7px;background:#d9d9d9"></div>
<div style="position:absolute;left:12.5px;top:358.075px;width:548.0px;height:0.7px;background:#d9d9d9"></div>
<div style="position:absolute;left:12.5px;top:368.54999999999995px;width:548.0px;height:0.7px;background:#d9d9d9"></div>
<div style="position:absolute;left:12.5px;top:379.025px;width:548.0px;height:0.7px;background:#d9d9d9"></div>
<div style="position:absolute;left:12.5px;top:389.5px;width:548.0px;height:0.7px;background:#d9d9d9"></div>
<div style="position:absolute;left:12.5px;top:399.975px;width:548.0px;height:0.7px;background:#d9d9d9"></div>
<div style="position:absolute;left:12.5px;top:410.44999999999993px;width:548.0px;height:0.7px;background:#d9d9d9"></div>
<div style="position:absolute;left:12.5px;top:420.92499999999995px;width:548.0px;height:0.7px;background:#d9d9d9"></div>
<div style="position:absolute;left:12.5px;top:431.4px;width:548.0px;height:0.7px;background:#d9d9d9"></div>
<div style="position:absolute;left:12.5px;top:441.875px;width:548.0px;height:0.7px;background:#d9d9d9"></div>
<div style="position:absolute;left:12.5px;top:452.35px;width:548.0px;height:0.7px;background:#d9d9d9"></div>
<div style="position:absolute;left:12.5px;top:462.82499999999993px;width:548.0px;height:0.7px;background:#d9d9d9"></div>
<div style="position:absolute;left:12.5px;top:473.29999999999995px;width:548.0px;height:0.7px;background:#d9d9d9"></div>
<div style="position:absolute;left:12.5px;top:483.775px;width:548.0px;height:0.7px;background:#d9d9d9"></div>
<div style="position:absolute;left:12.5px;top:494.25px;width:548.0px;height:0.7px;background:#d9d9d9"></div>
<div style="position:absolute;left:12.5px;top:504.725px;width:548.0px;height:0.7px;background:#d9d9d9"></div>
<div style="position:absolute;left:12.5px;top:515.1999999999999px;width:548.0px;height:0.7px;background:#d9d9d9"></div>
<div style="position:absolute;left:12.5px;top:525.675px;width:548.0px;height:0.7px;background:#d9d9d9"></div>
<div style="position:absolute;left:12.5px;top:536.15px;width:548.0px;height:0.7px;background:#d9d9d9"></div>
<div style="position:absolute;left:12.5px;top:546.625px;width:548.0px;height:0.7px;background:#d9d9d9"></div>
<div style="position:absolute;left:12.5px;top:557.1px;width:548.0px;height:0.7px;background:#d9d9d9"></div>
<div style="position:absolute;left:12.5px;top:567.5749999999999px;width:548.0px;height:0.7px;background:#d9d9d9"></div>
<div style="position:absolute;left:64.2px;top:97px;width:0.7px;height:470px;background:#d9d9d9"></div>
<div style="position:absolute;left:105.4px;top:97px;width:0.7px;height:470px;background:#d9d9d9"></div>
<div style="position:absolute;left:142.7px;top:97px;width:0.7px;height:470px;background:#d9d9d9"></div>
<div style="position:absolute;left:187.2px;top:97px;width:0.7px;height:470px;background:#d9d9d9"></div>
<div style="position:absolute;left:266.3px;top:97px;width:0.7px;height:470px;background:#d9d9d9"></div>
<div style="position:absolute;left:299.7px;top:97px;width:0.7px;height:470px;background:#d9d9d9"></div>
<div style="position:absolute;left:333.09999999999997px;top:97px;width:0.7px;height:470px;background:#d9d9d9"></div>
<div style="position:absolute;left:366.5px;top:97px;width:0.7px;height:470px;background:#d9d9d9"></div>
<div style="position:absolute;left:399.9px;top:97px;width:0.7px;height:470px;background:#d9d9d9"></div>
<div style="position:absolute;left:433.3px;top:97px;width:0.7px;height:470px;background:#d9d9d9"></div>
<div style="position:absolute;left:466.7px;top:97px;width:0.7px;height:470px;background:#d9d9d9"></div>
<div style="position:absolute;left:500.09999999999997px;top:97px;width:0.7px;height:470px;background:#d9d9d9"></div>
<div style="position:absolute;left:533.5px;top:97px;width:0.7px;height:470px;background:#d9d9d9"></div>
<div style="position:absolute;left:12.5px;top:96.8px;width:548.0px;height:20.88px;background:#d9d9d9"></div>
<div class="t" style="left:14px;top:104px;font-size:10.5px;line-height:12px;font-weight:bold;color:#111;">Sales Orders by Country 2015</div>
<div style="position:absolute;left:12.5px;top:557.6px;width:548.0px;height:10.44px;background:#d9d9d9"></div>
<svg style="position:absolute;left:455px;top:94px" width="85" height="40" viewBox="455 94 85 40"><g fill="none" stroke-linecap="butt"><path d="M460.75 116 V98.3 H470.5 C474 98.3 475 100.5 475 102.5 C475 105 473 106.2 470 106.3 C474 106.4 475.3 108.5 475.3 111 C475.3 114 473.5 115 470 115 H466.2 V105" stroke="#7cc11c" stroke-width="2.1"/><rect x="465.2" y="104.4" width="2" height="2" fill="#707070" stroke="none"/><path d="M477 104.8 L483.2 115.3 M489 104.8 L481 119 C480.5 119.6 480 119.6 478 119.6" stroke="#6e6e6e" stroke-width="1.3"/><rect x="489.3" y="105.3" width="12.3" height="10.3" rx="4.2" stroke="#6e6e6e" stroke-width="1.3"/><path d="M505.9 116 V109.5 C505.9 106.5 507.5 105.3 510.5 105.3 H514 C517 105.3 518.6 106.5 518.6 109.5 V116" stroke="#6e6e6e" stroke-width="1.3"/><path d="M533.3 101.2 V116 M533.3 111 C533.3 114.5 531.5 115.6 528 115.6 H526 C523 115.6 521.6 114 521.6 110.5 C521.6 107 523 105.3 526 105.3 H528 C531.5 105.3 533.3 106.5 533.3 110" stroke="#6e6e6e" stroke-width="1.3"/></g><g opacity="0.12" transform="translate(0,241) scale(1,-1)" fill="none"><path d="M460.75 116 V110 M466.2 116 H470 C473.5 116 475.3 114 475.3 111" stroke="#7cc11c" stroke-width="2"/><path d="M477 104.8 L483.2 115.3 M489 104.8 L481 119" stroke="#6e6e6e" stroke-width="1.3"/><rect x="489.3" y="105.3" width="12.3" height="10.3" rx="4.2" stroke="#6e6e6e" stroke-width="1.3"/><path d="M505.9 116 V109.5 C505.9 106.5 507.5 105.3 510.5 105.3 H514 C517 105.3 518.6 106.5 518.6 109.5 V116" stroke="#6e6e6e" stroke-width="1.3"/><path d="M533.3 116 V110 M521.6 110.5 C521.6 107 523 105.3 526 105.3 H528 C531.5 105.3 533.3 106.5 533.3 110" stroke="#6e6e6e" stroke-width="1.3"/></g></svg>
<div style="position:absolute;left:12.5px;top:138.6px;width:52.0px;height:219.975px;background:#e2efda"></div>
<div style="position:absolute;left:64.5px;top:138.6px;width:123.0px;height:20.94999999999999px;background:#e2efda"></div>
<div style="position:absolute;left:64.5px;top:159.54999999999998px;width:123.0px;height:199.025px;background:#fff"></div>
<div style="position:absolute;left:12.5px;top:358.575px;width:175.0px;height:10.44px;background:#efefef"></div>
<div style="position:absolute;left:12.5px;top:148.575px;width:52.0px;height:1px;background:#8c968c"></div>
<div style="position:absolute;left:12.5px;top:159.04999999999998px;width:52.0px;height:1px;background:#8c968c"></div>
<div style="position:absolute;left:64.5px;top:159.04999999999998px;width:123.0px;height:0.8px;background:#dcdcdc"></div>
<div style="position:absolute;left:12.5px;top:169.52499999999998px;width:52.0px;height:1px;background:#8c968c"></div>
<div style="position:absolute;left:64.5px;top:169.52499999999998px;width:123.0px;height:0.8px;background:#dcdcdc"></div>
<div style="position:absolute;left:12.5px;top:180.0px;width:52.0px;height:1px;background:#8c968c"></div>
<div style="position:absolute;left:64.5px;top:180.0px;width:123.0px;height:0.8px;background:#dcdcdc"></div>
<div style="position:absolute;left:12.5px;top:190.475px;width:52.0px;height:1px;background:#8c968c"></div>
<div style="position:absolute;left:64.5px;top:190.475px;width:123.0px;height:0.8px;background:#dcdcdc"></div>
<div style="position:absolute;left:12.5px;top:200.95px;width:52.0px;height:1px;background:#8c968c"></div>
<div style="position:absolute;left:64.5px;top:200.95px;width:123.0px;height:0.8px;background:#dcdcdc"></div>
<div style="position:absolute;left:12.5px;top:211.425px;width:52.0px;height:1px;background:#8c968c"></div>
<div style="position:absolute;left:64.5px;top:211.425px;width:123.0px;height:0.8px;background:#dcdcdc"></div>
<div style="position:absolute;left:12.5px;top:221.89999999999998px;width:52.0px;height:1px;background:#8c968c"></div>
<div style="position:absolute;left:64.5px;top:221.89999999999998px;width:123.0px;height:0.8px;background:#dcdcdc"></div>
<div style="position:absolute;left:12.5px;top:232.375px;width:52.0px;height:1px;background:#8c968c"></div>
<div style="position:absolute;left:64.5px;top:232.375px;width:123.0px;height:0.8px;background:#dcdcdc"></div>
<div style="position:absolute;left:12.5px;top:242.85px;width:52.0px;height:1px;background:#8c968c"></div>
<div style="position:absolute;left:64.5px;top:242.85px;width:123.0px;height:0.8px;background:#dcdcdc"></div>
<div style="position:absolute;left:12.5px;top:253.325px;width:52.0px;height:1px;background:#8c968c"></div>
<div style="position:absolute;left:64.5px;top:253.325px;width:123.0px;height:0.8px;background:#dcdcdc"></div>
<div style="position:absolute;left:12.5px;top:263.79999999999995px;width:52.0px;height:1px;background:#8c968c"></div>
<div style="position:absolute;left:64.5px;top:263.79999999999995px;width:123.0px;height:0.8px;background:#dcdcdc"></div>
<div style="position:absolute;left:12.5px;top:274.275px;width:52.0px;height:1px;background:#8c968c"></div>
<div style="position:absolute;left:64.5px;top:274.275px;width:123.0px;height:0.8px;background:#dcdcdc"></div>
<div style="position:absolute;left:12.5px;top:284.75px;width:52.0px;height:1px;background:#8c968c"></div>
<div style="position:absolute;left:64.5px;top:284.75px;width:123.0px;height:0.8px;background:#dcdcdc"></div>
<div style="position:absolute;left:12.5px;top:295.225px;width:52.0px;height:1px;background:#8c968c"></div>
<div style="position:absolute;left:64.5px;top:295.225px;width:123.0px;height:0.8px;background:#dcdcdc"></div>
<div style="position:absolute;left:12.5px;top:305.7px;width:52.0px;height:1px;background:#8c968c"></div>
<div style="position:absolute;left:64.5px;top:305.7px;width:123.0px;height:0.8px;background:#dcdcdc"></div>
<div style="position:absolute;left:12.5px;top:316.17499999999995px;width:52.0px;height:1px;background:#8c968c"></div>
<div style="position:absolute;left:64.5px;top:316.17499999999995px;width:123.0px;height:0.8px;background:#dcdcdc"></div>
<div style="position:absolute;left:12.5px;top:326.65px;width:52.0px;height:1px;background:#8c968c"></div>
<div style="position:absolute;left:64.5px;top:326.65px;width:123.0px;height:0.8px;background:#dcdcdc"></div>
<div style="position:absolute;left:12.5px;top:337.125px;width:52.0px;height:1px;background:#8c968c"></div>
<div style="position:absolute;left:64.5px;top:337.125px;width:123.0px;height:0.8px;background:#dcdcdc"></div>
<div style="position:absolute;left:12.5px;top:347.6px;width:52.0px;height:1px;background:#8c968c"></div>
<div style="position:absolute;left:64.5px;top:347.6px;width:123.0px;height:0.8px;background:#dcdcdc"></div>
<div style="position:absolute;left:12.5px;top:358.075px;width:52.0px;height:1px;background:#8c968c"></div>
<div style="position:absolute;left:64.5px;top:358.075px;width:123.0px;height:0.8px;background:#dcdcdc"></div>
<div style="position:absolute;left:12.5px;top:368.54999999999995px;width:52.0px;height:1px;background:#8c968c"></div>
<div style="position:absolute;left:64.5px;top:368.54999999999995px;width:123.0px;height:0.8px;background:#dcdcdc"></div>
<div style="position:absolute;left:12.5px;top:158.54999999999998px;width:175.0px;height:1.6px;background:#222"></div>
<div style="position:absolute;left:64.5px;top:159.04999999999998px;width:123px;height:0.6px;background:#222"></div>
<div style="position:absolute;left:64px;top:138.6px;width:1.5px;height:230.44999999999996px;background:#222"></div>
<div style="position:absolute;left:186.5px;top:138.6px;width:1.5px;height:230.44999999999996px;background:#222"></div>
<div style="position:absolute;left:64.5px;top:138.1px;width:123px;height:1px;background:#333"></div>
<div style="position:absolute;left:105.3px;top:138.6px;width:0.8px;height:230.44999999999996px;background:#e6e6e6"></div>
<div style="position:absolute;left:142.6px;top:138.6px;width:0.8px;height:230.44999999999996px;background:#e6e6e6"></div>
<div class="t" style="left:66px;top:141.4px;font-size:6.4px;color:#1e1e3a;color:#3a1e4a">Net Sales</div>
<div class="t" style="left:106.5px;top:141.4px;font-size:6.4px;color:#1e1e3a;">Percentage</div>
<div class="t" style="left:143.5px;top:141.4px;font-size:6.4px;color:#1e1e3a;">Rank Number</div>
<div class="t" style="left:14.5px;top:151.77499999999998px;font-size:7px;font-weight:bold;color:#222;">SHI: Country</div>
<div class="t" style="left:64.5px;top:151.77499999999998px;width:39.5px;text-align:right;font-size:6.6px;color:#101020;">* 1.000 EUR</div>
<div class="t" style="left:105.7px;top:151.77499999999998px;width:35.5px;text-align:right;font-size:6.6px;color:#101020;">%</div>
<div class="t" style="left:14.5px;top:162.14999999999998px;font-size:6.6px;color:#101020;">DE</div>
<div class="t" style="left:64.5px;top:162.14999999999998px;width:39.5px;text-align:right;font-size:6.6px;color:#101020;">88.696,02</div>
<div class="t" style="left:105.7px;top:162.14999999999998px;width:35.5px;text-align:right;font-size:6.6px;color:#101020;">21,247</div>
<div class="t" style="left:143px;top:162.14999999999998px;width:42.5px;text-align:right;font-size:6.6px;color:#101020;">1</div>
<div class="t" style="left:14.5px;top:172.62499999999997px;font-size:6.6px;color:#101020;">US</div>
<div class="t" style="left:64.5px;top:172.62499999999997px;width:39.5px;text-align:right;font-size:6.6px;color:#101020;">70.959,58</div>
<div class="t" style="left:105.7px;top:172.62499999999997px;width:35.5px;text-align:right;font-size:6.6px;color:#101020;">16,998</div>
<div class="t" style="left:143px;top:172.62499999999997px;width:42.5px;text-align:right;font-size:6.6px;color:#101020;">2</div>
<div class="t" style="left:14.5px;top:183.1px;font-size:6.6px;color:#101020;">AR</div>
<div class="t" style="left:64.5px;top:183.1px;width:39.5px;text-align:right;font-size:6.6px;color:#101020;">41.851,42</div>
<div class="t" style="left:105.7px;top:183.1px;width:35.5px;text-align:right;font-size:6.6px;color:#101020;">10,025</div>
<div class="t" style="left:143px;top:183.1px;width:42.5px;text-align:right;font-size:6.6px;color:#101020;">3</div>
<div class="t" style="left:14.5px;top:193.575px;font-size:6.6px;color:#101020;">FR</div>
<div class="t" style="left:64.5px;top:193.575px;width:39.5px;text-align:right;font-size:6.6px;color:#101020;">38.493,89</div>
<div class="t" style="left:105.7px;top:193.575px;width:35.5px;text-align:right;font-size:6.6px;color:#101020;">9,221</div>
<div class="t" style="left:143px;top:193.575px;width:42.5px;text-align:right;font-size:6.6px;color:#101020;">4</div>
<div class="t" style="left:14.5px;top:204.04999999999998px;font-size:6.6px;color:#101020;">JP</div>
<div class="t" style="left:64.5px;top:204.04999999999998px;width:39.5px;text-align:right;font-size:6.6px;color:#101020;">30.915,57</div>
<div class="t" style="left:105.7px;top:204.04999999999998px;width:35.5px;text-align:right;font-size:6.6px;color:#101020;">7,406</div>
<div class="t" style="left:143px;top:204.04999999999998px;width:42.5px;text-align:right;font-size:6.6px;color:#101020;">5</div>
<div class="t" style="left:14.5px;top:214.525px;font-size:6.6px;color:#101020;">CA</div>
<div class="t" style="left:64.5px;top:214.525px;width:39.5px;text-align:right;font-size:6.6px;color:#101020;">19.876,59</div>
<div class="t" style="left:105.7px;top:214.525px;width:35.5px;text-align:right;font-size:6.6px;color:#101020;">4,761</div>
<div class="t" style="left:143px;top:214.525px;width:42.5px;text-align:right;font-size:6.6px;color:#101020;">6</div>
<div class="t" style="left:14.5px;top:224.99999999999997px;font-size:6.6px;color:#101020;">MX</div>
<div class="t" style="left:64.5px;top:224.99999999999997px;width:39.5px;text-align:right;font-size:6.6px;color:#101020;">17.501,96</div>
<div class="t" style="left:105.7px;top:224.99999999999997px;width:35.5px;text-align:right;font-size:6.6px;color:#101020;">4,192</div>
<div class="t" style="left:143px;top:224.99999999999997px;width:42.5px;text-align:right;font-size:6.6px;color:#101020;">7</div>
<div class="t" style="left:14.5px;top:235.475px;font-size:6.6px;color:#101020;">GB</div>
<div class="t" style="left:64.5px;top:235.475px;width:39.5px;text-align:right;font-size:6.6px;color:#101020;">12.231,01</div>
<div class="t" style="left:105.7px;top:235.475px;width:35.5px;text-align:right;font-size:6.6px;color:#101020;">2,930</div>
<div class="t" style="left:143px;top:235.475px;width:42.5px;text-align:right;font-size:6.6px;color:#101020;">8</div>
<div class="t" style="left:14.5px;top:245.95px;font-size:6.6px;color:#101020;">ES</div>
<div class="t" style="left:64.5px;top:245.95px;width:39.5px;text-align:right;font-size:6.6px;color:#101020;">11.767,06</div>
<div class="t" style="left:105.7px;top:245.95px;width:35.5px;text-align:right;font-size:6.6px;color:#101020;">2,819</div>
<div class="t" style="left:143px;top:245.95px;width:42.5px;text-align:right;font-size:6.6px;color:#101020;">9</div>
<div class="t" style="left:14.5px;top:256.425px;font-size:6.6px;color:#101020;">BR</div>
<div class="t" style="left:64.5px;top:256.425px;width:39.5px;text-align:right;font-size:6.6px;color:#101020;">11.741,96</div>
<div class="t" style="left:105.7px;top:256.425px;width:35.5px;text-align:right;font-size:6.6px;color:#101020;">2,813</div>
<div class="t" style="left:143px;top:256.425px;width:42.5px;text-align:right;font-size:6.6px;color:#101020;">10</div>
<div class="t" style="left:14.5px;top:266.9px;font-size:6.6px;color:#101020;">ZA</div>
<div class="t" style="left:64.5px;top:266.9px;width:39.5px;text-align:right;font-size:6.6px;color:#101020;">9.193,10</div>
<div class="t" style="left:105.7px;top:266.9px;width:35.5px;text-align:right;font-size:6.6px;color:#101020;">2,202</div>
<div class="t" style="left:143px;top:266.9px;width:42.5px;text-align:right;font-size:6.6px;color:#101020;">11</div>
<div class="t" style="left:14.5px;top:277.375px;font-size:6.6px;color:#101020;">DK</div>
<div class="t" style="left:64.5px;top:277.375px;width:39.5px;text-align:right;font-size:6.6px;color:#101020;">8.790,49</div>
<div class="t" style="left:105.7px;top:277.375px;width:35.5px;text-align:right;font-size:6.6px;color:#101020;">2,106</div>
<div class="t" style="left:143px;top:277.375px;width:42.5px;text-align:right;font-size:6.6px;color:#101020;">12</div>
<div class="t" style="left:14.5px;top:287.85px;font-size:6.6px;color:#101020;">CN</div>
<div class="t" style="left:64.5px;top:287.85px;width:39.5px;text-align:right;font-size:6.6px;color:#101020;">8.562,31</div>
<div class="t" style="left:105.7px;top:287.85px;width:35.5px;text-align:right;font-size:6.6px;color:#101020;">2,051</div>
<div class="t" style="left:143px;top:287.85px;width:42.5px;text-align:right;font-size:6.6px;color:#101020;">13</div>
<div class="t" style="left:14.5px;top:298.32500000000005px;font-size:6.6px;color:#101020;">CH</div>
<div class="t" style="left:64.5px;top:298.32500000000005px;width:39.5px;text-align:right;font-size:6.6px;color:#101020;">8.045,31</div>
<div class="t" style="left:105.7px;top:298.32500000000005px;width:35.5px;text-align:right;font-size:6.6px;color:#101020;">1,927</div>
<div class="t" style="left:143px;top:298.32500000000005px;width:42.5px;text-align:right;font-size:6.6px;color:#101020;">14</div>
<div class="t" style="left:14.5px;top:308.8px;font-size:6.6px;color:#101020;">IT</div>
<div class="t" style="left:64.5px;top:308.8px;width:39.5px;text-align:right;font-size:6.6px;color:#101020;">8.009,94</div>
<div class="t" style="left:105.7px;top:308.8px;width:35.5px;text-align:right;font-size:6.6px;color:#101020;">1,919</div>
<div class="t" style="left:143px;top:308.8px;width:42.5px;text-align:right;font-size:6.6px;color:#101020;">15</div>
<div class="t" style="left:14.5px;top:319.275px;font-size:6.6px;color:#101020;">PL</div>
<div class="t" style="left:64.5px;top:319.275px;width:39.5px;text-align:right;font-size:6.6px;color:#101020;">7.863,99</div>
<div class="t" style="left:105.7px;top:319.275px;width:35.5px;text-align:right;font-size:6.6px;color:#101020;">1,884</div>
<div class="t" style="left:143px;top:319.275px;width:42.5px;text-align:right;font-size:6.6px;color:#101020;">16</div>
<div class="t" style="left:14.5px;top:329.75px;font-size:6.6px;color:#101020;">IN</div>
<div class="t" style="left:64.5px;top:329.75px;width:39.5px;text-align:right;font-size:6.6px;color:#101020;">7.817,04</div>
<div class="t" style="left:105.7px;top:329.75px;width:35.5px;text-align:right;font-size:6.6px;color:#101020;">1,873</div>
<div class="t" style="left:143px;top:329.75px;width:42.5px;text-align:right;font-size:6.6px;color:#101020;">17</div>
<div class="t" style="left:14.5px;top:340.225px;font-size:6.6px;color:#101020;">RU</div>
<div class="t" style="left:64.5px;top:340.225px;width:39.5px;text-align:right;font-size:6.6px;color:#101020;">7.652,38</div>
<div class="t" style="left:105.7px;top:340.225px;width:35.5px;text-align:right;font-size:6.6px;color:#101020;">1,833</div>
<div class="t" style="left:143px;top:340.225px;width:42.5px;text-align:right;font-size:6.6px;color:#101020;">18</div>
<div class="t" style="left:14.5px;top:350.70000000000005px;font-size:6.6px;color:#101020;">AT</div>
<div class="t" style="left:64.5px;top:350.70000000000005px;width:39.5px;text-align:right;font-size:6.6px;color:#101020;">7.480,84</div>
<div class="t" style="left:105.7px;top:350.70000000000005px;width:35.5px;text-align:right;font-size:6.6px;color:#101020;">1,792</div>
<div class="t" style="left:143px;top:350.70000000000005px;width:42.5px;text-align:right;font-size:6.6px;color:#101020;">19</div>
<div class="t" style="left:14px;top:360.97499999999997px;font-size:6.8px;font-weight:bold;color:#111;">Overall Result</div>
<div class="t" style="left:64.5px;top:360.97499999999997px;width:39.5px;text-align:right;font-size:6.8px;font-weight:bold;color:#111;">417.459,35</div>
<div class="t" style="left:105.7px;top:360.97499999999997px;width:35.5px;text-align:right;font-size:6.8px;font-weight:bold;color:#111;">100,000</div>
<div class="t" style="left:143px;top:360.97499999999997px;width:42.5px;text-align:right;font-size:6.8px;font-weight:bold;color:#111;">1</div>
<svg style="position:absolute;left:191px;top:139px" width="343" height="230.5"><defs><radialGradient id="pbg" cx="0.68" cy="0.22" r="0.8" gradientUnits="objectBoundingBox"><stop offset="0" stop-color="#ffffff"/><stop offset="0.3" stop-color="#eeeeee"/><stop offset="1" stop-color="#bfbfbf"/></radialGradient><filter id="psh" x="-20%" y="-20%" width="140%" height="140%"><feGaussianBlur in="SourceAlpha" stdDeviation="3"/><feOffset dx="0" dy="1"/><feComponentTransfer><feFuncA type="linear" slope="0.35"/></feComponentTransfer><feMerge><feMergeNode/><feMergeNode in="SourceGraphic"/></feMerge></filter><filter id="lsh" x="-30%" y="-30%" width="160%" height="160%"><feGaussianBlur in="SourceAlpha" stdDeviation="0.8"/><feOffset dx="0.8" dy="0.8"/><feComponentTransfer><feFuncA type="linear" slope="0.5"/></feComponentTransfer><feMerge><feMergeNode/><feMergeNode in="SourceGraphic"/></feMerge></filter></defs><rect x="0" y="0" width="343" height="230.5" fill="url(#pbg)"/><rect x="0.35" y="0.35" width="342.3" height="229.8" fill="none" stroke="#c4c4c4" stroke-width="0.7"/><g filter="url(#psh)"><path d="M168,124 L168.00,27.00 A97,97 0 0 1 262.32,101.34 Z" fill="#42702a" stroke="#ffffff" stroke-opacity="0.12" stroke-width="0.4"/><path d="M168,124 L262.32,101.34 A97,97 0 0 1 233.30,195.73 Z" fill="#497b2e" stroke="#ffffff" stroke-opacity="0.12" stroke-width="0.4"/><path d="M168,124 L233.30,195.73 A97,97 0 0 1 178.52,220.43 Z" fill="#4f8533" stroke="#ffffff" stroke-opacity="0.12" stroke-width="0.4"/><path d="M168,124 L178.52,220.43 A97,97 0 0 1 124.01,210.45 Z" fill="#538c36" stroke="#ffffff" stroke-opacity="0.12" stroke-width="0.4"/><path d="M168,124 L124.01,210.45 A97,97 0 0 1 89.89,181.52 Z" fill="#589439" stroke="#ffffff" stroke-opacity="0.12" stroke-width="0.4"/><path d="M168,124 L89.89,181.52 A97,97 0 0 1 76.41,155.95 Z" fill="#5c9b3d" stroke="#ffffff" stroke-opacity="0.12" stroke-width="0.4"/><path d="M168,124 L76.41,155.95 A97,97 0 0 1 71.25,131.00 Z" fill="#61a242" stroke="#ffffff" stroke-opacity="0.12" stroke-width="0.4"/><path d="M168,124 L71.25,131.00 A97,97 0 0 1 71.61,113.17 Z" fill="#66a946" stroke="#ffffff" stroke-opacity="0.12" stroke-width="0.4"/><path d="M168,124 L71.61,113.17 A97,97 0 0 1 75.02,96.35 Z" fill="#6bad4b" stroke="#ffffff" stroke-opacity="0.12" stroke-width="0.4"/><path d="M168,124 L75.02,96.35 A97,97 0 0 1 81.33,80.44 Z" fill="#72b153" stroke="#ffffff" stroke-opacity="0.12" stroke-width="0.4"/><path d="M168,124 L81.33,80.44 A97,97 0 0 1 88.17,68.90 Z" fill="#85ba6b" stroke="#ffffff" stroke-opacity="0.12" stroke-width="0.4"/><path d="M168,124 L88.17,68.90 A97,97 0 0 1 96.14,58.85 Z" fill="#93c17d" stroke="#ffffff" stroke-opacity="0.12" stroke-width="0.4"/><path d="M168,124 L96.14,58.85 A97,97 0 0 1 105.11,50.15 Z" fill="#9fc78b" stroke="#ffffff" stroke-opacity="0.12" stroke-width="0.4"/><path d="M168,124 L105.11,50.15 A97,97 0 0 1 114.48,43.10 Z" fill="#aacd98" stroke="#ffffff" stroke-opacity="0.12" stroke-width="0.4"/><path d="M168,124 L114.48,43.10 A97,97 0 0 1 124.60,37.25 Z" fill="#b5d3a5" stroke="#ffffff" stroke-opacity="0.12" stroke-width="0.4"/><path d="M168,124 L124.60,37.25 A97,97 0 0 1 135.15,32.73 Z" fill="#bfd9b1" stroke="#ffffff" stroke-opacity="0.12" stroke-width="0.4"/><path d="M168,124 L135.15,32.73 A97,97 0 0 1 146.10,29.51 Z" fill="#c9dfbe" stroke="#ffffff" stroke-opacity="0.12" stroke-width="0.4"/><path d="M168,124 L146.10,29.51 A97,97 0 0 1 157.10,27.61 Z" fill="#d2e5c8" stroke="#ffffff" stroke-opacity="0.12" stroke-width="0.4"/><path d="M168,124 L157.10,27.61 A97,97 0 0 1 168.00,27.00 Z" fill="#dbead3" stroke="#ffffff" stroke-opacity="0.12" stroke-width="0.4"/></g><rect x="307" y="9" width="27" height="207" fill="#e4e4e4" fill-opacity="0.6"/><rect x="313.5" y="19.20" width="3.2" height="3.6" fill="#42702a"/><text x="318.5" y="23.30" font-family="Liberation Sans" font-size="5.4" fill="#111">DE</text><rect x="313.5" y="29.68" width="3.2" height="3.6" fill="#497b2e"/><text x="318.5" y="33.78" font-family="Liberation Sans" font-size="5.4" fill="#111">US</text><rect x="313.5" y="40.16" width="3.2" height="3.6" fill="#4f8533"/><text x="318.5" y="44.26" font-family="Liberation Sans" font-size="5.4" fill="#111">AR</text><rect x="313.5" y="50.64" width="3.2" height="3.6" fill="#538c36"/><text x="318.5" y="54.74" font-family="Liberation Sans" font-size="5.4" fill="#111">FR</text><rect x="313.5" y="61.12" width="3.2" height="3.6" fill="#589439"/><text x="318.5" y="65.22" font-family="Liberation Sans" font-size="5.4" fill="#111">JP</text><rect x="313.5" y="71.60" width="3.2" height="3.6" fill="#5c9b3d"/><text x="318.5" y="75.70" font-family="Liberation Sans" font-size="5.4" fill="#111">CA</text><rect x="313.5" y="82.08" width="3.2" height="3.6" fill="#61a242"/><text x="318.5" y="86.18" font-family="Liberation Sans" font-size="5.4" fill="#111">MX</text><rect x="313.5" y="92.56" width="3.2" height="3.6" fill="#66a946"/><text x="318.5" y="96.66" font-family="Liberation Sans" font-size="5.4" fill="#111">GB</text><rect x="313.5" y="103.04" width="3.2" height="3.6" fill="#6bad4b"/><text x="318.5" y="107.14" font-family="Liberation Sans" font-size="5.4" fill="#111">ES</text><rect x="313.5" y="113.52" width="3.2" height="3.6" fill="#72b153"/><text x="318.5" y="117.62" font-family="Liberation Sans" font-size="5.4" fill="#111">BR</text><rect x="313.5" y="124.00" width="3.2" height="3.6" fill="#85ba6b"/><text x="318.5" y="128.10" font-family="Liberation Sans" font-size="5.4" fill="#111">ZA</text><rect x="313.5" y="134.48" width="3.2" height="3.6" fill="#93c17d"/><text x="318.5" y="138.58" font-family="Liberation Sans" font-size="5.4" fill="#111">DK</text><rect x="313.5" y="144.96" width="3.2" height="3.6" fill="#9fc78b"/><text x="318.5" y="149.06" font-family="Liberation Sans" font-size="5.4" fill="#111">CN</text><rect x="313.5" y="155.44" width="3.2" height="3.6" fill="#aacd98"/><text x="318.5" y="159.54" font-family="Liberation Sans" font-size="5.4" fill="#111">CH</text><rect x="313.5" y="165.92" width="3.2" height="3.6" fill="#b5d3a5"/><text x="318.5" y="170.02" font-family="Liberation Sans" font-size="5.4" fill="#111">IT</text><rect x="313.5" y="176.40" width="3.2" height="3.6" fill="#bfd9b1"/><text x="318.5" y="180.50" font-family="Liberation Sans" font-size="5.4" fill="#111">PL</text><rect x="313.5" y="186.88" width="3.2" height="3.6" fill="#c9dfbe"/><text x="318.5" y="190.98" font-family="Liberation Sans" font-size="5.4" fill="#111">IN</text><rect x="313.5" y="197.36" width="3.2" height="3.6" fill="#d2e5c8"/><text x="318.5" y="201.46" font-family="Liberation Sans" font-size="5.4" fill="#111">RU</text><rect x="313.5" y="207.84" width="3.2" height="3.6" fill="#dbead3"/><text x="318.5" y="211.94" font-family="Liberation Sans" font-size="5.4" fill="#111">AT</text><g filter="url(#lsh)"><rect x="231.50" y="34.00" width="16" height="10" fill="#3d3d3d"/><rect x="266.00" y="150.00" width="16" height="10" fill="#3d3d3d"/><rect x="210.40" y="216.50" width="16" height="10" fill="#3d3d3d"/><rect x="139.60" y="221.00" width="12" height="9" fill="#3d3d3d"/><rect x="89.80" y="202.50" width="12" height="9" fill="#3d3d3d"/><rect x="65.60" y="170.30" width="12" height="9" fill="#3d3d3d"/><rect x="55.40" y="141.00" width="12" height="9" fill="#3d3d3d"/><rect x="53.50" y="117.50" width="12" height="9" fill="#3d3d3d"/><rect x="55.00" y="98.00" width="12" height="9" fill="#3d3d3d"/><rect x="60.30" y="80.10" width="12" height="9" fill="#3d3d3d"/><rect x="66.70" y="65.00" width="12" height="9" fill="#3d3d3d"/><rect x="75.00" y="52.90" width="12" height="9" fill="#3d3d3d"/><rect x="84.50" y="41.50" width="12" height="9" fill="#3d3d3d"/><rect x="94.00" y="32.90" width="12" height="9" fill="#3d3d3d"/><rect x="104.00" y="24.50" width="12" height="9" fill="#3d3d3d"/><rect x="114.70" y="19.10" width="12" height="9" fill="#3d3d3d"/><rect x="126.70" y="14.70" width="12" height="9" fill="#3d3d3d"/><rect x="141.40" y="14.50" width="12" height="9" fill="#3d3d3d"/><rect x="155.30" y="13.50" width="12" height="9" fill="#3d3d3d"/></g><text x="239.50" y="41.20" text-anchor="middle" font-family="Liberation Sans" font-weight="bold" font-size="6" fill="#ffffff">21%</text><text x="274.00" y="157.20" text-anchor="middle" font-family="Liberation Sans" font-weight="bold" font-size="6" fill="#ffffff">17%</text><text x="218.40" y="223.70" text-anchor="middle" font-family="Liberation Sans" font-weight="bold" font-size="6" fill="#ffffff">10%</text><text x="145.60" y="227.70" text-anchor="middle" font-family="Liberation Sans" font-weight="bold" font-size="6" fill="#ffffff">9%</text><text x="95.80" y="209.20" text-anchor="middle" font-family="Liberation Sans" font-weight="bold" font-size="6" fill="#ffffff">7%</text><text x="71.60" y="177.00" text-anchor="middle" font-family="Liberation Sans" font-weight="bold" font-size="6" fill="#ffffff">5%</text><text x="61.40" y="147.70" text-anchor="middle" font-family="Liberation Sans" font-weight="bold" font-size="6" fill="#ffffff">4%</text><text x="59.50" y="124.20" text-anchor="middle" font-family="Liberation Sans" font-weight="bold" font-size="6" fill="#ffffff">3%</text><text x="61.00" y="104.70" text-anchor="middle" font-family="Liberation Sans" font-weight="bold" font-size="6" fill="#ffffff">3%</text><text x="66.30" y="86.80" text-anchor="middle" font-family="Liberation Sans" font-weight="bold" font-size="6" fill="#ffffff">3%</text><text x="72.70" y="71.70" text-anchor="middle" font-family="Liberation Sans" font-weight="bold" font-size="6" fill="#ffffff">2%</text><text x="81.00" y="59.60" text-anchor="middle" font-family="Liberation Sans" font-weight="bold" font-size="6" fill="#ffffff">2%</text><text x="90.50" y="48.20" text-anchor="middle" font-family="Liberation Sans" font-weight="bold" font-size="6" fill="#ffffff">2%</text><text x="100.00" y="39.60" text-anchor="middle" font-family="Liberation Sans" font-weight="bold" font-size="6" fill="#ffffff">2%</text><text x="110.00" y="31.20" text-anchor="middle" font-family="Liberation Sans" font-weight="bold" font-size="6" fill="#ffffff">2%</text><text x="120.70" y="25.80" text-anchor="middle" font-family="Liberation Sans" font-weight="bold" font-size="6" fill="#ffffff">2%</text><text x="132.70" y="21.40" text-anchor="middle" font-family="Liberation Sans" font-weight="bold" font-size="6" fill="#ffffff">2%</text><text x="147.40" y="21.20" text-anchor="middle" font-family="Liberation Sans" font-weight="bold" font-size="6" fill="#ffffff">2%</text><text x="161.30" y="20.20" text-anchor="middle" font-family="Liberation Sans" font-weight="bold" font-size="6" fill="#ffffff">2%</text></svg>
<svg style="position:absolute;left:12.5px;top:379px" width="521.5" height="167.5"><defs><linearGradient id="bg1" x1="0" x2="1" y1="0" y2="0"><stop offset="0" stop-color="#4f8a32"/><stop offset="0.6" stop-color="#548c36"/><stop offset="1" stop-color="#6ea552"/></linearGradient></defs><rect x="0" y="0" width="521.5" height="167.5" fill="#fff"/><path d="M0 0.5 H521.0 V167.0 H0" fill="none" stroke="#8a8a8a" stroke-width="1"/><line x1="40.5" y1="7.50" x2="434.9" y2="7.50" stroke="#8e8e8e" stroke-width="0.9"/><text x="37.0" y="9.50" text-anchor="end" font-family="Liberation Sans" font-size="6.5" fill="#222">100.000,00</text><line x1="40.5" y1="21.50" x2="434.9" y2="21.50" stroke="#8e8e8e" stroke-width="0.9"/><text x="37.0" y="23.50" text-anchor="end" font-family="Liberation Sans" font-size="6.5" fill="#222">90.000,00</text><line x1="40.5" y1="36.50" x2="434.9" y2="36.50" stroke="#8e8e8e" stroke-width="0.9"/><text x="37.0" y="38.50" text-anchor="end" font-family="Liberation Sans" font-size="6.5" fill="#222">80.000,00</text><line x1="40.5" y1="50.50" x2="434.9" y2="50.50" stroke="#8e8e8e" stroke-width="0.9"/><text x="37.0" y="52.50" text-anchor="end" font-family="Liberation Sans" font-size="6.5" fill="#222">70.000,00</text><line x1="40.5" y1="64.50" x2="434.9" y2="64.50" stroke="#8e8e8e" stroke-width="0.9"/><text x="37.0" y="66.50" text-anchor="end" font-family="Liberation Sans" font-size="6.5" fill="#222">60.000,00</text><line x1="40.5" y1="78.50" x2="434.9" y2="78.50" stroke="#8e8e8e" stroke-width="0.9"/><text x="37.0" y="80.50" text-anchor="end" font-family="Liberation Sans" font-size="6.5" fill="#222">50.000,00</text><line x1="40.5" y1="93.50" x2="434.9" y2="93.50" stroke="#8e8e8e" stroke-width="0.9"/><text x="37.0" y="95.50" text-anchor="end" font-family="Liberation Sans" font-size="6.5" fill="#222">40.000,00</text><line x1="40.5" y1="107.50" x2="434.9" y2="107.50" stroke="#8e8e8e" stroke-width="0.9"/><text x="37.0" y="109.50" text-anchor="end" font-family="Liberation Sans" font-size="6.5" fill="#222">30.000,00</text><line x1="40.5" y1="121.50" x2="434.9" y2="121.50" stroke="#8e8e8e" stroke-width="0.9"/><text x="37.0" y="123.50" text-anchor="end" font-family="Liberation Sans" font-size="6.5" fill="#222">20.000,00</text><line x1="40.5" y1="135.50" x2="434.9" y2="135.50" stroke="#8e8e8e" stroke-width="0.9"/><text x="37.0" y="137.50" text-anchor="end" font-family="Liberation Sans" font-size="6.5" fill="#222">10.000,00</text><line x1="40.5" y1="150.50" x2="434.9" y2="150.50" stroke="#c8c8c8" stroke-width="0.9"/><text x="37.0" y="152.50" text-anchor="end" font-family="Liberation Sans" font-size="6.5" fill="#222">0,00</text><line x1="42.55" y1="7.5" x2="42.55" y2="150" stroke="#d0d0d0" stroke-width="0.8"/><rect x="45.90" y="23.61" width="4.6" height="126.39" fill="url(#bg1)"/><text x="52.88" y="161.29999999999995" text-anchor="middle" font-family="Liberation Sans" font-size="6" fill="#222">DE</text><rect x="66.55" y="48.88" width="4.6" height="101.12" fill="url(#bg1)"/><text x="73.52" y="161.29999999999995" text-anchor="middle" font-family="Liberation Sans" font-size="6" fill="#222">US</text><rect x="87.20" y="90.36" width="4.6" height="59.64" fill="url(#bg1)"/><text x="94.17" y="161.29999999999995" text-anchor="middle" font-family="Liberation Sans" font-size="6" fill="#222">AR</text><rect x="107.85" y="95.15" width="4.6" height="54.85" fill="url(#bg1)"/><text x="114.82" y="161.29999999999995" text-anchor="middle" font-family="Liberation Sans" font-size="6" fill="#222">FR</text><rect x="128.50" y="105.95" width="4.6" height="44.05" fill="url(#bg1)"/><text x="135.47" y="161.29999999999995" text-anchor="middle" font-family="Liberation Sans" font-size="6" fill="#222">JP</text><rect x="149.15" y="121.68" width="4.6" height="28.32" fill="url(#bg1)"/><text x="156.12" y="161.29999999999995" text-anchor="middle" font-family="Liberation Sans" font-size="6" fill="#222">CA</text><rect x="169.80" y="125.06" width="4.6" height="24.94" fill="url(#bg1)"/><text x="176.77" y="161.29999999999995" text-anchor="middle" font-family="Liberation Sans" font-size="6" fill="#222">MX</text><rect x="190.45" y="132.57" width="4.6" height="17.43" fill="url(#bg1)"/><text x="197.43" y="161.29999999999995" text-anchor="middle" font-family="Liberation Sans" font-size="6" fill="#222">GB</text><rect x="211.10" y="133.23" width="4.6" height="16.77" fill="url(#bg1)"/><text x="218.07" y="161.29999999999995" text-anchor="middle" font-family="Liberation Sans" font-size="6" fill="#222">ES</text><rect x="231.75" y="133.27" width="4.6" height="16.73" fill="url(#bg1)"/><text x="238.72" y="161.29999999999995" text-anchor="middle" font-family="Liberation Sans" font-size="6" fill="#222">BR</text><rect x="252.40" y="136.90" width="4.6" height="13.10" fill="url(#bg1)"/><text x="259.38" y="161.29999999999995" text-anchor="middle" font-family="Liberation Sans" font-size="6" fill="#222">ZA</text><rect x="273.05" y="137.47" width="4.6" height="12.53" fill="url(#bg1)"/><text x="280.02" y="161.29999999999995" text-anchor="middle" font-family="Liberation Sans" font-size="6" fill="#222">DK</text><rect x="293.70" y="137.80" width="4.6" height="12.20" fill="url(#bg1)"/><text x="300.68" y="161.29999999999995" text-anchor="middle" font-family="Liberation Sans" font-size="6" fill="#222">CN</text><rect x="314.35" y="138.54" width="4.6" height="11.46" fill="url(#bg1)"/><text x="321.32" y="161.29999999999995" text-anchor="middle" font-family="Liberation Sans" font-size="6" fill="#222">CH</text><rect x="335.00" y="138.59" width="4.6" height="11.41" fill="url(#bg1)"/><text x="341.97" y="161.29999999999995" text-anchor="middle" font-family="Liberation Sans" font-size="6" fill="#222">IT</text><rect x="355.65" y="138.79" width="4.6" height="11.21" fill="url(#bg1)"/><text x="362.62" y="161.29999999999995" text-anchor="middle" font-family="Liberation Sans" font-size="6" fill="#222">PL</text><rect x="376.30" y="138.86" width="4.6" height="11.14" fill="url(#bg1)"/><text x="383.27" y="161.29999999999995" text-anchor="middle" font-family="Liberation Sans" font-size="6" fill="#222">IN</text><rect x="396.95" y="139.10" width="4.6" height="10.90" fill="url(#bg1)"/><text x="403.93" y="161.29999999999995" text-anchor="middle" font-family="Liberation Sans" font-size="6" fill="#222">RU</text><rect x="417.60" y="139.34" width="4.6" height="10.66" fill="url(#bg1)"/><text x="424.57" y="161.29999999999995" text-anchor="middle" font-family="Liberation Sans" font-size="6" fill="#222">AT</text><line x1="42.55" y1="150" x2="42.55" y2="152.5" stroke="#bdbdbd" stroke-width="0.8"/><line x1="63.20" y1="150" x2="63.20" y2="152.5" stroke="#bdbdbd" stroke-width="0.8"/><line x1="83.85" y1="150" x2="83.85" y2="152.5" stroke="#bdbdbd" stroke-width="0.8"/><line x1="104.50" y1="150" x2="104.50" y2="152.5" stroke="#bdbdbd" stroke-width="0.8"/><line x1="125.15" y1="150" x2="125.15" y2="152.5" stroke="#bdbdbd" stroke-width="0.8"/><line x1="145.80" y1="150" x2="145.80" y2="152.5" stroke="#bdbdbd" stroke-width="0.8"/><line x1="166.45" y1="150" x2="166.45" y2="152.5" stroke="#bdbdbd" stroke-width="0.8"/><line x1="187.10" y1="150" x2="187.10" y2="152.5" stroke="#bdbdbd" stroke-width="0.8"/><line x1="207.75" y1="150" x2="207.75" y2="152.5" stroke="#bdbdbd" stroke-width="0.8"/><line x1="228.40" y1="150" x2="228.40" y2="152.5" stroke="#bdbdbd" stroke-width="0.8"/><line x1="249.05" y1="150" x2="249.05" y2="152.5" stroke="#bdbdbd" stroke-width="0.8"/><line x1="269.70" y1="150" x2="269.70" y2="152.5" stroke="#bdbdbd" stroke-width="0.8"/><line x1="290.35" y1="150" x2="290.35" y2="152.5" stroke="#bdbdbd" stroke-width="0.8"/><line x1="311.00" y1="150" x2="311.00" y2="152.5" stroke="#bdbdbd" stroke-width="0.8"/><line x1="331.65" y1="150" x2="331.65" y2="152.5" stroke="#bdbdbd" stroke-width="0.8"/><line x1="352.30" y1="150" x2="352.30" y2="152.5" stroke="#bdbdbd" stroke-width="0.8"/><line x1="372.95" y1="150" x2="372.95" y2="152.5" stroke="#bdbdbd" stroke-width="0.8"/><line x1="393.60" y1="150" x2="393.60" y2="152.5" stroke="#bdbdbd" stroke-width="0.8"/><line x1="414.25" y1="150" x2="414.25" y2="152.5" stroke="#bdbdbd" stroke-width="0.8"/><line x1="434.90" y1="150" x2="434.90" y2="152.5" stroke="#bdbdbd" stroke-width="0.8"/><rect x="447.5" y="60.00" width="4" height="4" fill="#548235"/><text x="453.5" y="64.20" font-family="Liberation Sans" font-size="6.2" fill="#1a1a1a">Net Sales * 1.000 EUR</text><rect x="447.5" y="72.50" width="4" height="4" fill="#70ad47"/><text x="453.5" y="76.70" font-family="Liberation Sans" font-size="6.2" fill="#1a1a1a">Percentage %</text><rect x="447.5" y="85.00" width="4" height="4" fill="#a9d18e"/><text x="453.5" y="89.20" font-family="Liberation Sans" font-size="6.2" fill="#1a1a1a">Rank Number</text></svg>
<div style="position:absolute;left:560.5px;top:87px;width:11px;height:480px;background:#fff"></div>
<div style="position:absolute;left:561.5px;top:87px;width:9.5px;height:481px;background:#f0f0f0;border-left:0.7px solid #d8d8d8"></div>
<div style="position:absolute;left:562px;top:88px;width:7.5px;height:7.5px;border:0.8px solid #b8b8b8;background:#fff"></div>
<svg style="position:absolute;left:563.5px;top:90.5px" width="5" height="3" viewBox="0 0 5 3"><path d="M0.5 2.6 L2.5 0.6 L4.5 2.6" stroke="#555" stroke-width="0.8" fill="none"/></svg>
<div style="position:absolute;left:562px;top:96px;width:7.5px;height:454.5px;background:#fff;border:0.8px solid #a8a8a8"></div>
<div style="position:absolute;left:562px;top:561px;width:7.5px;height:7.5px;border:0.8px solid #b8b8b8;background:#fff"></div>
<svg style="position:absolute;left:563.5px;top:563.8px" width="5" height="3" viewBox="0 0 5 3"><path d="M0.3 0.3 H4.7 L2.5 2.6Z" fill="#333"/></svg>
<div style="position:absolute;left:0px;top:567.5px;width:571px;height:15.5px;background:#f0f0f0;border-top:1px solid #c6c6c6"></div>
<div class="t" style="left:13px;top:570.5px;font-size:5px;color:#2e7d5b;">&#9664;</div>
<div class="t" style="left:28px;top:570.5px;font-size:5px;color:#2e7d5b;">&#9654;</div>
<svg style="position:absolute;left:43px;top:575px" width="9" height="2" viewBox="0 0 9 2"><rect x="0" y="0" width="1.3" height="1.3" fill="#444"/><rect x="3" y="0" width="1.3" height="1.3" fill="#444"/><rect x="6" y="0" width="1.3" height="1.3" fill="#444"/></svg>
<div style="position:absolute;left:52px;top:567.5px;width:107.5px;height:13px;background:#fff;border-bottom:1.5px solid #217346;border-left:1px solid #d4d4d4;border-right:1px solid #d4d4d4"></div>
<div class="t" style="left:58px;top:570.8px;font-size:6.8px;font-weight:bold;color:#217346;">Sales Orders by Country 2015</div>
<div class="t" style="left:166px;top:571.3px;font-size:6.6px;color:#222;">Net Sales per month</div>
<div class="t" style="left:243.7px;top:571.3px;font-size:6.6px;color:#222;">Top 5 Customers</div>
<div class="t" style="left:311.6px;top:571.3px;font-size:6.6px;color:#222;">Quantities</div>
<div class="t" style="left:356px;top:571.3px;font-size:6.6px;color:#222;">Detail</div>
<div class="t" style="left:391.6px;top:571.3px;font-size:6.6px;color:#222;">Filter und</div>
<div style="position:absolute;left:237px;top:569px;width:0.7px;height:11px;background:#c8c8c8"></div>
<div style="position:absolute;left:303.5px;top:569px;width:0.7px;height:11px;background:#c8c8c8"></div>
<div style="position:absolute;left:348.6px;top:569px;width:0.7px;height:11px;background:#c8c8c8"></div>
<div style="position:absolute;left:382px;top:569px;width:0.7px;height:11px;background:#c8c8c8"></div>
<svg style="position:absolute;left:426px;top:575px" width="9" height="2" viewBox="0 0 9 2"><rect x="0" y="0" width="1.3" height="1.3" fill="#217346"/><rect x="3" y="0" width="1.3" height="1.3" fill="#217346"/><rect x="6" y="0" width="1.3" height="1.3" fill="#217346"/></svg>
<svg style="position:absolute;left:438.5px;top:570px" width="9" height="9" viewBox="0 0 9 9"><circle cx="4.5" cy="4.5" r="4" fill="#fff" stroke="#777" stroke-width="0.7"/><path d="M4.5 2 V7 M2 4.5 H7" stroke="#666" stroke-width="0.8"/></svg>
<div class="t" style="left:456.5px;top:570px;font-size:7px;color:#888;">&#8942;</div>
<div style="position:absolute;left:467px;top:570px;width:94px;height:8px;background:#fff;border:1px solid #c6c6c6"></div>
<div style="position:absolute;left:474.5px;top:571px;width:67.5px;height:6px;background:#fff;border:1px solid #b8b8b8"></div>
<div class="t" style="left:469px;top:571px;font-size:4.5px;color:#555;">&#9664;</div>
<div class="t" style="left:555px;top:571px;font-size:4.5px;color:#555;">&#9654;</div>
<div style="position:absolute;left:571px;top:87px;width:429px;height:496px;background:#fff;border-left:1px solid #c6c6c6"></div>
<div class="t" style="left:579px;top:93.5px;font-size:12.5px;line-height:14px;color:#4a9a86;transform:scaleX(.82);transform-origin:0 50%;">Analysis</div>
<svg style="position:absolute;left:982px;top:97.5px" width="5" height="4" viewBox="0 0 5 4"><path d="M0 0.5 H5 L2.5 3.5Z" fill="#777"/></svg>
<svg style="position:absolute;left:990px;top:95.5px" width="7" height="7" viewBox="0 0 7 7"><path d="M0.8 0.8 L6.2 6.2 M6.2 0.8 L0.8 6.2" stroke="#555" stroke-width="1"/></svg>
<div style="position:absolute;left:577.5px;top:111px;width:393.5px;height:10.5px;border:1px solid #aab4c2;border-top-color:#8a8f98;background:#fff"></div>
<div class="t" style="left:580px;top:113px;font-size:6.5px;color:#111;">Find..</div>
<div class="t" style="left:963px;top:112px;font-size:7px;color:#777;">&#10005;</div>
<div style="position:absolute;left:975px;top:111px;width:21px;height:10.5px;border:1px solid #8a8f98;background:linear-gradient(#fafafa,#dcdcdc);border-radius:1px"></div>
<svg style="position:absolute;left:981px;top:112.5px" width="9" height="7.5" viewBox="0 0 9 7.5"><rect x="0.5" y="2" width="3.3" height="5" rx="1" fill="#2a56b0"/><rect x="5.2" y="2" width="3.3" height="5" rx="1" fill="#2a56b0"/><rect x="1.2" y="0" width="2" height="3" fill="#2a56b0"/><rect x="5.8" y="0" width="2" height="3" fill="#2a56b0"/><rect x="3" y="2.8" width="3" height="1.6" fill="#2a56b0"/></svg>
<svg style="position:absolute;left:580px;top:128px" width="8" height="8"><path d="M4 0.5 L7.5 2 L7.5 6 L4 7.5 L0.5 6 L0.5 2Z" fill="#8a8a8a"/><path d="M0.5 2 L4 3.5 L7.5 2 M4 3.5 L4 7.5" stroke="#c8c8c8" stroke-width="0.6" fill="none"/></svg>
<div class="t" style="left:592px;top:129px;font-size:6.2px;color:#1a1030;-webkit-text-stroke:0.12px #1a1030;transform:scaleX(.84);transform-origin:0 50%;">DATA SOURCE</div>
<svg style="position:absolute;left:720px;top:128px" width="7" height="8"><rect x="0" y="0" width="1.2" height="8" fill="#888"/><rect x="2" y="0" width="1.2" height="8" fill="#888"/><rect x="4" y="0" width="1.2" height="8" fill="#888"/><rect x="6" y="0" width="1" height="8" fill="#888"/></svg>
<div class="t" style="left:732px;top:129px;font-size:6.2px;color:#1a1030;-webkit-text-stroke:0.12px #1a1030;transform:scaleX(.84);transform-origin:0 50%;">COLUMNS</div>
<svg style="position:absolute;left:861px;top:128px" width="9" height="9"><rect x="1" y="3" width="6" height="5" fill="#fff" stroke="#888" stroke-width="0.8"/><rect x="4" y="0.5" width="4.5" height="3.5" fill="#e8b838"/></svg>
<div class="t" style="left:874px;top:129px;font-size:6.2px;color:#1a1030;-webkit-text-stroke:0.12px #1a1030;transform:scaleX(.84);transform-origin:0 50%;">PROPERTIES</div>
<div style="position:absolute;left:578px;top:140px;width:138px;height:424px;border:1px solid #c8c8c8;background:#fff"></div>
<div style="position:absolute;left:718px;top:140px;width:140px;height:113px;border:1px solid #c8c8c8;background:#fff"></div>
<div style="position:absolute;left:718px;top:270.5px;width:140px;height:122px;border:1px solid #c8c8c8;background:#fff"></div>
<div style="position:absolute;left:718px;top:409.5px;width:140px;height:154px;border:1px solid #c8c8c8;background:#fff"></div>
<div style="position:absolute;left:860.5px;top:140px;width:135.5px;height:424px;border:1px solid #c8c8c8;background:#fff"></div>
<div style="position:absolute;left:590px;top:143.0px;width:93px;height:9.5px;background:#ebebeb"></div>
<svg style="position:absolute;left:581px;top:144.00px" width="6" height="6"><path d="M3 0 L6 1.5 L6 4.5 L3 6 L0 4.5 L0 1.5Z" fill="#e8782a"/><path d="M0 1.5 L3 3 L6 1.5" fill="#f5b050"/></svg>
<div class="t" style="left:591px;top:143.0px;margin-top:0.8px;font-size:6.3px;color:#0a0020;-webkit-text-stroke:0.08px #0a0020;transform:scaleX(.91);transform-origin:0 50%;">[VMSHE01] SHINE Reporting [DS_7]</div>
<svg style="position:absolute;left:582px;top:154.20000000000002px" width="5" height="5"><rect x="0.35" y="0.35" width="4.3" height="4.3" fill="#fff" stroke="#666" stroke-width="0.7"/><line x1="1" y1="2.5" x2="4" y2="2.5" stroke="#444" stroke-width="0.7"/></svg>
<div class="t" style="left:591px;top:152.4px;margin-top:0.8px;font-size:6.3px;color:#0a0020;-webkit-text-stroke:0.08px #0a0020;transform:scaleX(.91);transform-origin:0 50%;">Measures</div>
<div style="position:absolute;left:594px;top:163.8px;width:0.6px;height:9.4px;background:#999"></div>
<div style="position:absolute;left:594px;top:166.3px;width:4.5px;height:0.6px;background:#999"></div>
<div class="t" style="left:600.5px;top:161.8px;margin-top:0.8px;font-size:6.3px;color:#0a0020;-webkit-text-stroke:0.08px #0a0020;transform:scaleX(.91);transform-origin:0 50%;">Net Sales</div>
<div style="position:absolute;left:594px;top:170.7px;width:0.6px;height:9.4px;background:#999"></div>
<div style="position:absolute;left:594px;top:175.7px;width:4.5px;height:0.6px;background:#999"></div>
<div class="t" style="left:600.5px;top:171.2px;margin-top:0.8px;font-size:6.3px;color:#0a0020;-webkit-text-stroke:0.08px #0a0020;transform:scaleX(.91);transform-origin:0 50%;">Order Quantity</div>
<div style="position:absolute;left:594px;top:180.1px;width:0.6px;height:9.4px;background:#999"></div>
<div style="position:absolute;left:594px;top:185.1px;width:4.5px;height:0.6px;background:#999"></div>
<div class="t" style="left:600.5px;top:180.6px;margin-top:0.8px;font-size:6.3px;color:#0a0020;-webkit-text-stroke:0.08px #0a0020;transform:scaleX(.91);transform-origin:0 50%;">Rank Number: Net Sales</div>
<div style="position:absolute;left:594px;top:189.5px;width:0.6px;height:4.7px;background:#999"></div>
<div style="position:absolute;left:594px;top:194.5px;width:4.5px;height:0.6px;background:#999"></div>
<div class="t" style="left:600.5px;top:190.0px;margin-top:0.8px;font-size:6.3px;color:#0a0020;-webkit-text-stroke:0.08px #0a0020;transform:scaleX(.91);transform-origin:0 50%;">Percentage Contribution: Net Sales</div>
<svg style="position:absolute;left:582px;top:201.20000000000002px" width="5" height="5"><rect x="0.35" y="0.35" width="4.3" height="4.3" fill="#fff" stroke="#666" stroke-width="0.7"/><line x1="1" y1="2.5" x2="4" y2="2.5" stroke="#444" stroke-width="0.7"/><line x1="2.5" y1="1" x2="2.5" y2="4" stroke="#444" stroke-width="0.7"/></svg>
<div class="t" style="left:591px;top:199.4px;margin-top:0.8px;font-size:6.3px;color:#0a0020;-webkit-text-stroke:0.08px #0a0020;transform:scaleX(.91);transform-origin:0 50%;">[SHISALORD__BILLSTATU] Billing Status</div>
<svg style="position:absolute;left:582px;top:210.60000000000002px" width="5" height="5"><rect x="0.35" y="0.35" width="4.3" height="4.3" fill="#fff" stroke="#666" stroke-width="0.7"/><line x1="1" y1="2.5" x2="4" y2="2.5" stroke="#444" stroke-width="0.7"/><line x1="2.5" y1="1" x2="2.5" y2="4" stroke="#444" stroke-width="0.7"/></svg>
<div class="t" style="left:591px;top:208.8px;margin-top:0.8px;font-size:6.3px;color:#0a0020;-webkit-text-stroke:0.08px #0a0020;transform:scaleX(.91);transform-origin:0 50%;">[SHIBUPART] Business Partner ID</div>
<svg style="position:absolute;left:582px;top:220.0px" width="5" height="5"><rect x="0.35" y="0.35" width="4.3" height="4.3" fill="#fff" stroke="#666" stroke-width="0.7"/><line x1="1" y1="2.5" x2="4" y2="2.5" stroke="#444" stroke-width="0.7"/><line x1="2.5" y1="1" x2="2.5" y2="4" stroke="#444" stroke-width="0.7"/></svg>
<div class="t" style="left:591px;top:218.2px;margin-top:0.8px;font-size:6.3px;color:#0a0020;-webkit-text-stroke:0.08px #0a0020;transform:scaleX(.91);transform-origin:0 50%;">[SHI_DELD__0CALQUARTER] Cal. year / quar</div>
<svg style="position:absolute;left:582px;top:229.40000000000003px" width="5" height="5"><rect x="0.35" y="0.35" width="4.3" height="4.3" fill="#fff" stroke="#666" stroke-width="0.7"/><line x1="1" y1="2.5" x2="4" y2="2.5" stroke="#444" stroke-width="0.7"/><line x1="2.5" y1="1" x2="2.5" y2="4" stroke="#444" stroke-width="0.7"/></svg>
<div class="t" style="left:591px;top:227.60000000000002px;margin-top:0.8px;font-size:6.3px;color:#0a0020;-webkit-text-stroke:0.08px #0a0020;transform:scaleX(.91);transform-origin:0 50%;">[0CALQUARTER] Cal. year / quar</div>
<svg style="position:absolute;left:582px;top:238.8px" width="5" height="5"><rect x="0.35" y="0.35" width="4.3" height="4.3" fill="#fff" stroke="#666" stroke-width="0.7"/><line x1="1" y1="2.5" x2="4" y2="2.5" stroke="#444" stroke-width="0.7"/><line x1="2.5" y1="1" x2="2.5" y2="4" stroke="#444" stroke-width="0.7"/></svg>
<div class="t" style="left:591px;top:237.0px;margin-top:0.8px;font-size:6.3px;color:#0a0020;-webkit-text-stroke:0.08px #0a0020;transform:scaleX(.91);transform-origin:0 50%;">[SHI_DELD__0CALDAY] Calendar day</div>
<svg style="position:absolute;left:582px;top:248.20000000000002px" width="5" height="5"><rect x="0.35" y="0.35" width="4.3" height="4.3" fill="#fff" stroke="#666" stroke-width="0.7"/><line x1="1" y1="2.5" x2="4" y2="2.5" stroke="#444" stroke-width="0.7"/><line x1="2.5" y1="1" x2="2.5" y2="4" stroke="#444" stroke-width="0.7"/></svg>
<div class="t" style="left:591px;top:246.4px;margin-top:0.8px;font-size:6.3px;color:#0a0020;-webkit-text-stroke:0.08px #0a0020;transform:scaleX(.91);transform-origin:0 50%;">[0CALDAY] Calendar day</div>
<svg style="position:absolute;left:582px;top:257.6px" width="5" height="5"><rect x="0.35" y="0.35" width="4.3" height="4.3" fill="#fff" stroke="#666" stroke-width="0.7"/><line x1="1" y1="2.5" x2="4" y2="2.5" stroke="#444" stroke-width="0.7"/><line x1="2.5" y1="1" x2="2.5" y2="4" stroke="#444" stroke-width="0.7"/></svg>
<div class="t" style="left:591px;top:255.8px;margin-top:0.8px;font-size:6.3px;color:#0a0020;-webkit-text-stroke:0.08px #0a0020;transform:scaleX(.91);transform-origin:0 50%;">[SHI_DELD__0CALMONTH2] Calendar month</div>
<svg style="position:absolute;left:582px;top:267.0px" width="5" height="5"><rect x="0.35" y="0.35" width="4.3" height="4.3" fill="#fff" stroke="#666" stroke-width="0.7"/><line x1="1" y1="2.5" x2="4" y2="2.5" stroke="#444" stroke-width="0.7"/><line x1="2.5" y1="1" x2="2.5" y2="4" stroke="#444" stroke-width="0.7"/></svg>
<div class="t" style="left:591px;top:265.2px;margin-top:0.8px;font-size:6.3px;color:#0a0020;-webkit-text-stroke:0.08px #0a0020;transform:scaleX(.91);transform-origin:0 50%;">[SHI_DELD__0CALYEAR] Calendar Year</div>
<svg style="position:absolute;left:582px;top:276.40000000000003px" width="5" height="5"><rect x="0.35" y="0.35" width="4.3" height="4.3" fill="#fff" stroke="#666" stroke-width="0.7"/><line x1="1" y1="2.5" x2="4" y2="2.5" stroke="#444" stroke-width="0.7"/><line x1="2.5" y1="1" x2="2.5" y2="4" stroke="#444" stroke-width="0.7"/></svg>
<div class="t" style="left:591px;top:274.6px;margin-top:0.8px;font-size:6.3px;color:#0a0020;-webkit-text-stroke:0.08px #0a0020;transform:scaleX(.91);transform-origin:0 50%;">[SHI_DELD__0CALWEEK] Calendar year / week</div>
<svg style="position:absolute;left:582px;top:285.8px" width="5" height="5"><rect x="0.35" y="0.35" width="4.3" height="4.3" fill="#fff" stroke="#666" stroke-width="0.7"/><line x1="1" y1="2.5" x2="4" y2="2.5" stroke="#444" stroke-width="0.7"/><line x1="2.5" y1="1" x2="2.5" y2="4" stroke="#444" stroke-width="0.7"/></svg>
<div class="t" style="left:591px;top:284.0px;margin-top:0.8px;font-size:6.3px;color:#0a0020;-webkit-text-stroke:0.08px #0a0020;transform:scaleX(.91);transform-origin:0 50%;">[0CALWEEK] Calendar year / week</div>
<svg style="position:absolute;left:582px;top:295.2px" width="5" height="5"><rect x="0.35" y="0.35" width="4.3" height="4.3" fill="#fff" stroke="#666" stroke-width="0.7"/><line x1="1" y1="2.5" x2="4" y2="2.5" stroke="#444" stroke-width="0.7"/><line x1="2.5" y1="1" x2="2.5" y2="4" stroke="#444" stroke-width="0.7"/></svg>
<div class="t" style="left:591px;top:293.4px;margin-top:0.8px;font-size:6.3px;color:#0a0020;-webkit-text-stroke:0.08px #0a0020;transform:scaleX(.91);transform-origin:0 50%;">[SHI_DELD__0CALMONTH] Calendar Year/Month</div>
<svg style="position:absolute;left:582px;top:304.6px" width="5" height="5"><rect x="0.35" y="0.35" width="4.3" height="4.3" fill="#fff" stroke="#666" stroke-width="0.7"/><line x1="1" y1="2.5" x2="4" y2="2.5" stroke="#444" stroke-width="0.7"/><line x1="2.5" y1="1" x2="2.5" y2="4" stroke="#444" stroke-width="0.7"/></svg>
<div class="t" style="left:591px;top:302.8px;margin-top:0.8px;font-size:6.3px;color:#0a0020;-webkit-text-stroke:0.08px #0a0020;transform:scaleX(.91);transform-origin:0 50%;">[0CALMONTH] Calendar Year/Month</div>
<svg style="position:absolute;left:582px;top:314.00000000000006px" width="5" height="5"><rect x="0.35" y="0.35" width="4.3" height="4.3" fill="#fff" stroke="#666" stroke-width="0.7"/><line x1="1" y1="2.5" x2="4" y2="2.5" stroke="#444" stroke-width="0.7"/><line x1="2.5" y1="1" x2="2.5" y2="4" stroke="#444" stroke-width="0.7"/></svg>
<div class="t" style="left:591px;top:312.20000000000005px;margin-top:0.8px;font-size:6.3px;color:#0a0020;-webkit-text-stroke:0.08px #0a0020;transform:scaleX(.91);transform-origin:0 50%;">[0CALYEAR] Calendar Year</div>
<svg style="position:absolute;left:582px;top:323.40000000000003px" width="5" height="5"><rect x="0.35" y="0.35" width="4.3" height="4.3" fill="#fff" stroke="#666" stroke-width="0.7"/><line x1="1" y1="2.5" x2="4" y2="2.5" stroke="#444" stroke-width="0.7"/><line x1="2.5" y1="1" x2="2.5" y2="4" stroke="#444" stroke-width="0.7"/></svg>
<div class="t" style="left:591px;top:321.6px;margin-top:0.8px;font-size:6.3px;color:#0a0020;-webkit-text-stroke:0.08px #0a0020;transform:scaleX(.91);transform-origin:0 50%;">[SHIBUPART__SHICOMPN] Company Name</div>
<svg style="position:absolute;left:582px;top:332.8px" width="5" height="5"><rect x="0.35" y="0.35" width="4.3" height="4.3" fill="#fff" stroke="#666" stroke-width="0.7"/><line x1="1" y1="2.5" x2="4" y2="2.5" stroke="#444" stroke-width="0.7"/><line x1="2.5" y1="1" x2="2.5" y2="4" stroke="#444" stroke-width="0.7"/></svg>
<div class="t" style="left:591px;top:331.0px;margin-top:0.8px;font-size:6.3px;color:#0a0020;-webkit-text-stroke:0.08px #0a0020;transform:scaleX(.91);transform-origin:0 50%;">[SHISALORD__0D_NW_CA] Created On</div>
<svg style="position:absolute;left:582px;top:342.2px" width="5" height="5"><rect x="0.35" y="0.35" width="4.3" height="4.3" fill="#fff" stroke="#666" stroke-width="0.7"/><line x1="1" y1="2.5" x2="4" y2="2.5" stroke="#444" stroke-width="0.7"/><line x1="2.5" y1="1" x2="2.5" y2="4" stroke="#444" stroke-width="0.7"/></svg>
<div class="t" style="left:591px;top:340.4px;margin-top:0.8px;font-size:6.3px;color:#0a0020;-webkit-text-stroke:0.08px #0a0020;transform:scaleX(.91);transform-origin:0 50%;">[0CURRENCY] Currency</div>
<svg style="position:absolute;left:582px;top:351.6px" width="5" height="5"><rect x="0.35" y="0.35" width="4.3" height="4.3" fill="#fff" stroke="#666" stroke-width="0.7"/><line x1="1" y1="2.5" x2="4" y2="2.5" stroke="#444" stroke-width="0.7"/><line x1="2.5" y1="1" x2="2.5" y2="4" stroke="#444" stroke-width="0.7"/></svg>
<div class="t" style="left:591px;top:349.8px;margin-top:0.8px;font-size:6.3px;color:#0a0020;-webkit-text-stroke:0.08px #0a0020;transform:scaleX(.91);transform-origin:0 50%;">[SHI_DELD] Delivery Date</div>
<svg style="position:absolute;left:582px;top:361.00000000000006px" width="5" height="5"><rect x="0.35" y="0.35" width="4.3" height="4.3" fill="#fff" stroke="#666" stroke-width="0.7"/><line x1="1" y1="2.5" x2="4" y2="2.5" stroke="#444" stroke-width="0.7"/><line x1="2.5" y1="1" x2="2.5" y2="4" stroke="#444" stroke-width="0.7"/></svg>
<div class="t" style="left:591px;top:359.20000000000005px;margin-top:0.8px;font-size:6.3px;color:#0a0020;-webkit-text-stroke:0.08px #0a0020;transform:scaleX(.91);transform-origin:0 50%;">[SHISALORD__DELIVSTAT] Delivery Status</div>
<svg style="position:absolute;left:582px;top:370.40000000000003px" width="5" height="5"><rect x="0.35" y="0.35" width="4.3" height="4.3" fill="#fff" stroke="#666" stroke-width="0.7"/><line x1="1" y1="2.5" x2="4" y2="2.5" stroke="#444" stroke-width="0.7"/><line x1="2.5" y1="1" x2="2.5" y2="4" stroke="#444" stroke-width="0.7"/></svg>
<div class="t" style="left:591px;top:368.6px;margin-top:0.8px;font-size:6.3px;color:#0a0020;-webkit-text-stroke:0.08px #0a0020;transform:scaleX(.91);transform-origin:0 50%;">[SHIEMPLOY] Employee</div>
<svg style="position:absolute;left:582px;top:379.8px" width="5" height="5"><rect x="0.35" y="0.35" width="4.3" height="4.3" fill="#fff" stroke="#666" stroke-width="0.7"/><line x1="1" y1="2.5" x2="4" y2="2.5" stroke="#444" stroke-width="0.7"/><line x1="2.5" y1="1" x2="2.5" y2="4" stroke="#444" stroke-width="0.7"/></svg>
<div class="t" style="left:591px;top:378.0px;margin-top:0.8px;font-size:6.3px;color:#0a0020;-webkit-text-stroke:0.08px #0a0020;transform:scaleX(.91);transform-origin:0 50%;">[SHI_DELD__0HALFYEAR] Halfyear</div>
<svg style="position:absolute;left:582px;top:389.2px" width="5" height="5"><rect x="0.35" y="0.35" width="4.3" height="4.3" fill="#fff" stroke="#666" stroke-width="0.7"/><line x1="1" y1="2.5" x2="4" y2="2.5" stroke="#444" stroke-width="0.7"/><line x1="2.5" y1="1" x2="2.5" y2="4" stroke="#444" stroke-width="0.7"/></svg>
<div class="t" style="left:591px;top:387.4px;margin-top:0.8px;font-size:6.3px;color:#0a0020;-webkit-text-stroke:0.08px #0a0020;transform:scaleX(.91);transform-origin:0 50%;">[0INFOPROV] InfoProvider</div>
<svg style="position:absolute;left:582px;top:398.6px" width="5" height="5"><rect x="0.35" y="0.35" width="4.3" height="4.3" fill="#fff" stroke="#666" stroke-width="0.7"/><line x1="1" y1="2.5" x2="4" y2="2.5" stroke="#444" stroke-width="0.7"/><line x1="2.5" y1="1" x2="2.5" y2="4" stroke="#444" stroke-width="0.7"/></svg>
<div class="t" style="left:591px;top:396.8px;margin-top:0.8px;font-size:6.3px;color:#0a0020;-webkit-text-stroke:0.08px #0a0020;transform:scaleX(.91);transform-origin:0 50%;">[SHISALORD__0D_NW_POLS] Lifecycle Status</div>
<svg style="position:absolute;left:582px;top:408.0px" width="5" height="5"><rect x="0.35" y="0.35" width="4.3" height="4.3" fill="#fff" stroke="#666" stroke-width="0.7"/><line x1="1" y1="2.5" x2="4" y2="2.5" stroke="#444" stroke-width="0.7"/><line x1="2.5" y1="1" x2="2.5" y2="4" stroke="#444" stroke-width="0.7"/></svg>
<div class="t" style="left:591px;top:406.2px;margin-top:0.8px;font-size:6.3px;color:#0a0020;-webkit-text-stroke:0.08px #0a0020;transform:scaleX(.91);transform-origin:0 50%;">[0D_NW_PUNI] Order Unit</div>
<svg style="position:absolute;left:582px;top:417.40000000000003px" width="5" height="5"><rect x="0.35" y="0.35" width="4.3" height="4.3" fill="#fff" stroke="#666" stroke-width="0.7"/><line x1="1" y1="2.5" x2="4" y2="2.5" stroke="#444" stroke-width="0.7"/><line x1="2.5" y1="1" x2="2.5" y2="4" stroke="#444" stroke-width="0.7"/></svg>
<div class="t" style="left:591px;top:415.6px;margin-top:0.8px;font-size:6.3px;color:#0a0020;-webkit-text-stroke:0.08px #0a0020;transform:scaleX(.91);transform-origin:0 50%;">[0D_NW_POOS] Ordering Status</div>
<svg style="position:absolute;left:582px;top:426.8px" width="5" height="5"><rect x="0.35" y="0.35" width="4.3" height="4.3" fill="#fff" stroke="#666" stroke-width="0.7"/><line x1="1" y1="2.5" x2="4" y2="2.5" stroke="#444" stroke-width="0.7"/><line x1="2.5" y1="1" x2="2.5" y2="4" stroke="#444" stroke-width="0.7"/></svg>
<div class="t" style="left:591px;top:425.0px;margin-top:0.8px;font-size:6.3px;color:#0a0020;-webkit-text-stroke:0.08px #0a0020;transform:scaleX(.91);transform-origin:0 50%;">[0D_NW_PROD] Product ID</div>
<svg style="position:absolute;left:582px;top:436.20000000000005px" width="5" height="5"><rect x="0.35" y="0.35" width="4.3" height="4.3" fill="#fff" stroke="#666" stroke-width="0.7"/><line x1="1" y1="2.5" x2="4" y2="2.5" stroke="#444" stroke-width="0.7"/><line x1="2.5" y1="1" x2="2.5" y2="4" stroke="#444" stroke-width="0.7"/></svg>
<div class="t" style="left:591px;top:434.40000000000003px;margin-top:0.8px;font-size:6.3px;color:#0a0020;-webkit-text-stroke:0.08px #0a0020;transform:scaleX(.91);transform-origin:0 50%;">[SHI_DELD__0CALQUART1] Quarter</div>
<svg style="position:absolute;left:582px;top:445.6px" width="5" height="5"><rect x="0.35" y="0.35" width="4.3" height="4.3" fill="#fff" stroke="#666" stroke-width="0.7"/><line x1="1" y1="2.5" x2="4" y2="2.5" stroke="#444" stroke-width="0.7"/><line x1="2.5" y1="1" x2="2.5" y2="4" stroke="#444" stroke-width="0.7"/></svg>
<div class="t" style="left:591px;top:443.8px;margin-top:0.8px;font-size:6.3px;color:#0a0020;-webkit-text-stroke:0.08px #0a0020;transform:scaleX(.91);transform-origin:0 50%;">[0CALQUART1] Quarter</div>
<svg style="position:absolute;left:582px;top:455.0px" width="5" height="5"><rect x="0.35" y="0.35" width="4.3" height="4.3" fill="#fff" stroke="#666" stroke-width="0.7"/><line x1="1" y1="2.5" x2="4" y2="2.5" stroke="#444" stroke-width="0.7"/><line x1="2.5" y1="1" x2="2.5" y2="4" stroke="#444" stroke-width="0.7"/></svg>
<div class="t" style="left:591px;top:453.2px;margin-top:0.8px;font-size:6.3px;color:#0a0020;-webkit-text-stroke:0.08px #0a0020;transform:scaleX(.91);transform-origin:0 50%;">[SHIEMPLOY__SHICTRY] SHI: Country (Navi)</div>
<svg style="position:absolute;left:582px;top:464.40000000000003px" width="5" height="5"><rect x="0.35" y="0.35" width="4.3" height="4.3" fill="#fff" stroke="#666" stroke-width="0.7"/><line x1="1" y1="2.5" x2="4" y2="2.5" stroke="#444" stroke-width="0.7"/><line x1="2.5" y1="1" x2="2.5" y2="4" stroke="#444" stroke-width="0.7"/></svg>
<div class="t" style="left:591px;top:462.6px;margin-top:0.8px;font-size:6.3px;color:#0a0020;-webkit-text-stroke:0.08px #0a0020;transform:scaleX(.91);transform-origin:0 50%;">[SHIBUPART__SHICTRY] SHI: Country (Navi)</div>
<svg style="position:absolute;left:582px;top:473.8px" width="5" height="5"><rect x="0.35" y="0.35" width="4.3" height="4.3" fill="#fff" stroke="#666" stroke-width="0.7"/><line x1="1" y1="2.5" x2="4" y2="2.5" stroke="#444" stroke-width="0.7"/><line x1="2.5" y1="1" x2="2.5" y2="4" stroke="#444" stroke-width="0.7"/></svg>
<div class="t" style="left:591px;top:472.0px;margin-top:0.8px;font-size:6.3px;color:#0a0020;-webkit-text-stroke:0.08px #0a0020;transform:scaleX(.91);transform-origin:0 50%;">[SHIBUPART__SHIREGIO] SHI: Region (Navi)</div>
<svg style="position:absolute;left:582px;top:483.20000000000005px" width="5" height="5"><rect x="0.35" y="0.35" width="4.3" height="4.3" fill="#fff" stroke="#666" stroke-width="0.7"/><line x1="1" y1="2.5" x2="4" y2="2.5" stroke="#444" stroke-width="0.7"/><line x1="2.5" y1="1" x2="2.5" y2="4" stroke="#444" stroke-width="0.7"/></svg>
<div class="t" style="left:591px;top:481.40000000000003px;margin-top:0.8px;font-size:6.3px;color:#0a0020;-webkit-text-stroke:0.08px #0a0020;transform:scaleX(.91);transform-origin:0 50%;">[SHISALORD] SHI: Sales Order</div>
<svg style="position:absolute;left:582px;top:492.6px" width="5" height="5"><rect x="0.35" y="0.35" width="4.3" height="4.3" fill="#fff" stroke="#666" stroke-width="0.7"/><line x1="1" y1="2.5" x2="4" y2="2.5" stroke="#444" stroke-width="0.7"/><line x1="2.5" y1="1" x2="2.5" y2="4" stroke="#444" stroke-width="0.7"/></svg>
<div class="t" style="left:591px;top:490.8px;margin-top:0.8px;font-size:6.3px;color:#0a0020;-webkit-text-stroke:0.08px #0a0020;transform:scaleX(.91);transform-origin:0 50%;">[SHISALITM] SHI: Sales Order Ite</div>
<svg style="position:absolute;left:582px;top:502.0px" width="5" height="5"><rect x="0.35" y="0.35" width="4.3" height="4.3" fill="#fff" stroke="#666" stroke-width="0.7"/><line x1="1" y1="2.5" x2="4" y2="2.5" stroke="#444" stroke-width="0.7"/><line x1="2.5" y1="1" x2="2.5" y2="4" stroke="#444" stroke-width="0.7"/></svg>
<div class="t" style="left:591px;top:500.2px;margin-top:0.8px;font-size:6.3px;color:#0a0020;-webkit-text-stroke:0.08px #0a0020;transform:scaleX(.91);transform-origin:0 50%;">[SHI_DELD__0WEEKDAY1] Weekday</div>
<svg style="position:absolute;left:582px;top:511.40000000000003px" width="5" height="5"><rect x="0.35" y="0.35" width="4.3" height="4.3" fill="#fff" stroke="#666" stroke-width="0.7"/><line x1="1" y1="2.5" x2="4" y2="2.5" stroke="#444" stroke-width="0.7"/><line x1="2.5" y1="1" x2="2.5" y2="4" stroke="#444" stroke-width="0.7"/></svg>
<div class="t" style="left:591px;top:509.6px;margin-top:0.8px;font-size:6.3px;color:#0a0020;-webkit-text-stroke:0.08px #0a0020;transform:scaleX(.91);transform-origin:0 50%;">[0WEEKDAY1] Weekday</div>
<div style="position:absolute;left:579px;top:555.5px;width:136px;height:7px;background:#f4f4f4"></div>
<div style="position:absolute;left:588.5px;top:556px;width:116px;height:6px;border:1px solid #a8a8a8;border-radius:2px;background:linear-gradient(#f8f8f8,#d8d8d8)"></div>
<div class="t" style="left:644px;top:555.5px;font-size:5px;color:#666;">|||</div>
<div class="t" style="left:581px;top:555.5px;font-size:4.5px;color:#777;">&#9664;</div>
<div class="t" style="left:709px;top:555.5px;font-size:4.5px;color:#777;">&#9654;</div>
<svg style="position:absolute;left:721px;top:143px" width="5" height="5"><rect x="0.35" y="0.35" width="4.3" height="4.3" fill="#fff" stroke="#666" stroke-width="0.7"/><line x1="1" y1="2.5" x2="4" y2="2.5" stroke="#444" stroke-width="0.7"/></svg>
<div class="t" style="left:729px;top:141.5px;margin-top:0.8px;font-size:6.3px;color:#0a0020;-webkit-text-stroke:0.08px #0a0020;transform:scaleX(.91);transform-origin:0 50%;">Measures</div>
<svg style="position:absolute;left:757px;top:142px" width="6" height="6"><path d="M0 0 L6 0 L3.6 3 L3.6 6 L2.4 6 L2.4 3Z" fill="#c8b400"/></svg>
<div class="t" style="left:739px;top:151.0px;margin-top:0.8px;font-size:6.3px;color:#0a0020;-webkit-text-stroke:0.08px #0a0020;transform:scaleX(.91);transform-origin:0 50%;">Net Sales</div>
<div class="t" style="left:739px;top:160.3px;margin-top:0.8px;font-size:6.3px;color:#0a0020;-webkit-text-stroke:0.08px #0a0020;transform:scaleX(.91);transform-origin:0 50%;">Percentage Contribution: Net Sales</div>
<div class="t" style="left:739px;top:169.6px;margin-top:0.8px;font-size:6.3px;color:#0a0020;-webkit-text-stroke:0.08px #0a0020;transform:scaleX(.91);transform-origin:0 50%;">Rank Number: Net Sales</div>
<div style="position:absolute;left:732.5px;top:150px;width:0.6px;height:23.5px;background:#999"></div>
<div style="position:absolute;left:732.5px;top:164px;width:5px;height:0.6px;background:#999"></div>
<div style="position:absolute;left:732.5px;top:173.5px;width:5px;height:0.6px;background:#999"></div>
<svg style="position:absolute;left:720px;top:259px" width="8" height="7"><rect x="0" y="0" width="8" height="1.2" fill="#888"/><rect x="0" y="2" width="8" height="1.2" fill="#888"/><rect x="0" y="4" width="8" height="1.2" fill="#888"/><rect x="0" y="6" width="8" height="1" fill="#888"/></svg>
<div class="t" style="left:732px;top:259.5px;font-size:6.2px;color:#1a1030;-webkit-text-stroke:0.12px #1a1030;transform:scaleX(.84);transform-origin:0 50%;">ROWS</div>
<svg style="position:absolute;left:850.5px;top:258.5px" width="8" height="8"><rect x="0.5" y="0.5" width="1.3" height="7" fill="#2a56b0"/><rect x="2.5" y="1" width="5" height="1.2" fill="#d03030"/><rect x="2.5" y="3.5" width="3.5" height="1.2" fill="#2a56b0"/><rect x="2.5" y="6" width="2" height="1.2" fill="#2a56b0"/></svg>
<svg style="position:absolute;left:721px;top:273px" width="5" height="5"><rect x="0.35" y="0.35" width="4.3" height="4.3" fill="#fff" stroke="#666" stroke-width="0.7"/><line x1="1" y1="2.5" x2="4" y2="2.5" stroke="#444" stroke-width="0.7"/></svg>
<div class="t" style="left:729px;top:271.5px;margin-top:0.8px;font-size:6.3px;color:#0a0020;-webkit-text-stroke:0.08px #0a0020;transform:scaleX(.91);transform-origin:0 50%;">[SHIBUPART__SHICTRY] SHI: Country (Navi)</div>
<div style="position:absolute;left:732.5px;top:279px;width:0.6px;height:6px;background:#aaa"></div>
<div style="position:absolute;left:732.5px;top:284.8px;width:5px;height:0.6px;background:#aaa"></div>
<div class="t" style="left:739px;top:281px;font-size:6.3px;color:#a8a8a8;transform:scaleX(.93);transform-origin:0 50%;">All Members Selected</div>
<svg style="position:absolute;left:721px;top:400px" width="7" height="7"><path d="M0.5 0.5 L6.5 0.5 L4 3.8 L4 6.5 L3 6.5 L3 3.8Z" fill="none" stroke="#999" stroke-width="0.7"/></svg>
<div class="t" style="left:732px;top:400px;font-size:6.2px;color:#1a1030;-webkit-text-stroke:0.12px #1a1030;transform:scaleX(.84);transform-origin:0 50%;">BACKGROUND FILTER</div>
<svg style="position:absolute;left:721px;top:413px" width="5" height="5"><rect x="0.35" y="0.35" width="4.3" height="4.3" fill="#fff" stroke="#666" stroke-width="0.7"/><line x1="1" y1="2.5" x2="4" y2="2.5" stroke="#444" stroke-width="0.7"/></svg>
<div class="t" style="left:729px;top:411.5px;margin-top:0.8px;font-size:6.3px;color:#0a0020;-webkit-text-stroke:0.08px #0a0020;transform:scaleX(.91);transform-origin:0 50%;">[0CURRENCY] Currency</div>
<svg style="position:absolute;left:794.5px;top:412.5px" width="6" height="6"><path d="M0 0 L6 0 L3.6 3 L3.6 6 L2.4 6 L2.4 3Z" fill="#c8b400"/></svg>
<div style="position:absolute;left:732.5px;top:419px;width:0.6px;height:6px;background:#999"></div>
<div style="position:absolute;left:732.5px;top:424.8px;width:5px;height:0.6px;background:#999"></div>
<div class="t" style="left:739px;top:421px;margin-top:0.8px;font-size:6.3px;color:#0a0020;-webkit-text-stroke:0.08px #0a0020;transform:scaleX(.91);transform-origin:0 50%;">EUR</div>
<div style="position:absolute;left:864px;top:145px;width:128px;height:0.8px;background:#dde3ea"></div>
<div class="t" style="left:865px;top:141px;padding:0 1px;background:#fff;margin-top:0.6px;font-size:6.3px;color:#0a0020;-webkit-text-stroke:0.08px #0a0020;transform:scaleX(.93);transform-origin:0 50%;">General</div>
<div style="position:absolute;left:864px;top:200.5px;width:128px;height:0.8px;background:#dde3ea"></div>
<div style="position:absolute;left:864px;top:237.4px;width:128px;height:0.8px;background:#dde3ea"></div>
<div style="position:absolute;left:864px;top:274.4px;width:128px;height:0.8px;background:#dde3ea"></div>
<div style="position:absolute;left:864px;top:311px;width:128px;height:0.8px;background:#dde3ea"></div>
<div class="t" style="left:866px;top:153.5px;margin-top:0.6px;font-size:6.3px;color:#0a0020;-webkit-text-stroke:0.08px #0a0020;transform:scaleX(.93);transform-origin:0 50%;">Description</div>
<div style="position:absolute;left:865px;top:160.5px;width:126.5px;height:10.5px;border:1px solid #c8c8c8;border-top-color:#a8a8a8;background:#ececec"></div>
<div class="t" style="left:867px;top:162.5px;margin-top:0.6px;font-size:6.3px;color:#0a0020;-webkit-text-stroke:0.08px #0a0020;transform:scaleX(.93);transform-origin:0 50%;">SHINE Reporting</div>
<div class="t" style="left:866px;top:178.5px;margin-top:0.6px;font-size:6.3px;color:#0a0020;-webkit-text-stroke:0.08px #0a0020;transform:scaleX(.93);transform-origin:0 50%;">Technical Name</div>
<div style="position:absolute;left:865px;top:186px;width:126.5px;height:10.5px;border:1px solid #c8c8c8;border-top-color:#a8a8a8;background:#ececec"></div>
<div class="t" style="left:867px;top:188px;margin-top:0.6px;font-size:6.3px;color:#0a0020;-webkit-text-stroke:0.08px #0a0020;transform:scaleX(.93);transform-origin:0 50%;">!AVMSHE01</div>
<div style="position:absolute;left:864px;top:207.7px;width:128px;height:0.8px;background:#dde3ea"></div>
<div class="t" style="left:865px;top:203.7px;padding:0 1px;background:#fff;margin-top:0.6px;font-size:6.3px;color:#0a0020;-webkit-text-stroke:0.08px #0a0020;transform:scaleX(.93);transform-origin:0 50%;">Zero Suppression</div>
<div style="position:absolute;left:864px;top:244.5px;width:128px;height:0.8px;background:#dde3ea"></div>
<div class="t" style="left:865px;top:240.5px;padding:0 1px;background:#fff;margin-top:0.6px;font-size:6.3px;color:#0a0020;-webkit-text-stroke:0.08px #0a0020;transform:scaleX(.93);transform-origin:0 50%;">Compact Display</div>
<div style="position:absolute;left:864px;top:282px;width:128px;height:0.8px;background:#dde3ea"></div>
<div class="t" style="left:865px;top:278px;padding:0 1px;background:#fff;margin-top:0.6px;font-size:6.3px;color:#0a0020;-webkit-text-stroke:0.08px #0a0020;transform:scaleX(.93);transform-origin:0 50%;">Totals</div>
<div style="position:absolute;left:864px;top:318.9px;width:128px;height:0.8px;background:#dde3ea"></div>
<div class="t" style="left:865px;top:314.9px;padding:0 1px;background:#fff;margin-top:0.6px;font-size:6.3px;color:#0a0020;-webkit-text-stroke:0.08px #0a0020;transform:scaleX(.93);transform-origin:0 50%;">General Format</div>
<div style="position:absolute;left:864px;top:387px;width:128px;height:0.8px;background:#dde3ea"></div>
<div style="position:absolute;left:864.5px;top:215.0px;width:6.5px;height:6.5px;border:1px solid #b8b8b8;background:linear-gradient(#f0f0f0,#fff)"></div>
<div class="t" style="left:874px;top:214.7px;margin-top:0.6px;font-size:6.3px;color:#0a0020;-webkit-text-stroke:0.08px #0a0020;transform:scaleX(.93);transform-origin:0 50%;">Suppress Zeros in Rows</div>
<div style="position:absolute;left:864.5px;top:227.0px;width:6.5px;height:6.5px;border:1px solid #b8b8b8;background:linear-gradient(#f0f0f0,#fff)"></div>
<div class="t" style="left:874px;top:226.7px;margin-top:0.6px;font-size:6.3px;color:#0a0020;-webkit-text-stroke:0.08px #0a0020;transform:scaleX(.93);transform-origin:0 50%;">Suppress Zeros in Columns</div>
<div style="position:absolute;left:864.5px;top:252.5px;width:6.5px;height:6.5px;border:1px solid #b8b8b8;background:linear-gradient(#f0f0f0,#fff)"></div>
<div class="t" style="left:874px;top:252.2px;margin-top:0.6px;font-size:6.3px;color:#0a0020;-webkit-text-stroke:0.08px #0a0020;transform:scaleX(.93);transform-origin:0 50%;">Compact Display in Rows</div>
<div style="position:absolute;left:864.5px;top:264.5px;width:6.5px;height:6.5px;border:1px solid #b8b8b8;background:linear-gradient(#f0f0f0,#fff)"></div>
<div class="t" style="left:874px;top:264.2px;margin-top:0.6px;font-size:6.3px;color:#0a0020;-webkit-text-stroke:0.08px #0a0020;transform:scaleX(.93);transform-origin:0 50%;">Compact Display in Columns</div>
<div style="position:absolute;left:864.5px;top:289.9px;width:6.5px;height:6.5px;border:1px solid #b8b8b8;background:linear-gradient(#f0f0f0,#fff)"></div>
<div class="t" style="left:874px;top:289.59999999999997px;margin-top:0.6px;font-size:6.3px;color:#0a0020;-webkit-text-stroke:0.08px #0a0020;transform:scaleX(.93);transform-origin:0 50%;">Total Rows Above Members</div>
<div style="position:absolute;left:864.5px;top:301.2px;width:6.5px;height:6.5px;border:1px solid #b8b8b8;background:linear-gradient(#f0f0f0,#fff)"></div>
<div class="t" style="left:874px;top:300.9px;margin-top:0.6px;font-size:6.3px;color:#0a0020;-webkit-text-stroke:0.08px #0a0020;transform:scaleX(.93);transform-origin:0 50%;">Total Columns Left of Members</div>
<div class="t" style="left:866px;top:327.5px;margin-top:0.6px;font-size:6.3px;color:#0a0020;-webkit-text-stroke:0.08px #0a0020;transform:scaleX(.93);transform-origin:0 50%;">Display of Negative Values:</div>
<div style="position:absolute;left:864.5px;top:336px;width:127.5px;height:10.5px;border:1px solid #a0a0a0;background:#fff"></div>
<div class="t" style="left:867px;top:338px;margin-top:0.6px;font-size:6.3px;color:#0a0020;-webkit-text-stroke:0.08px #0a0020;transform:scaleX(.93);transform-origin:0 50%;">-X</div>
<div style="position:absolute;left:983.5px;top:337px;width:8px;height:8.5px;background:linear-gradient(#f6f6f6,#d8d8d8);border-left:1px solid #a0a0a0"></div>
<svg style="position:absolute;left:985.3px;top:340.3px" width="5" height="4" viewBox="0 0 5 4"><path d="M0 0 H5 L2.5 3.2Z" fill="#111"/></svg>
<div class="t" style="left:866px;top:348.5px;margin-top:0.6px;font-size:6.3px;color:#0a0020;-webkit-text-stroke:0.08px #0a0020;transform:scaleX(.93);transform-origin:0 50%;">Display Zero as:</div>
<div style="position:absolute;left:864.5px;top:357px;width:127.5px;height:10.5px;border:1px solid #a0a0a0;background:#fff"></div>
<div class="t" style="left:867px;top:359px;margin-top:0.6px;font-size:6.3px;color:#0a0020;-webkit-text-stroke:0.08px #0a0020;transform:scaleX(.93);transform-origin:0 50%;">With Currency/Unit</div>
<div style="position:absolute;left:983.5px;top:358px;width:8px;height:8.5px;background:linear-gradient(#f6f6f6,#d8d8d8);border-left:1px solid #a0a0a0"></div>
<svg style="position:absolute;left:985.3px;top:361.3px" width="5" height="4" viewBox="0 0 5 4"><path d="M0 0 H5 L2.5 3.2Z" fill="#111"/></svg>
<div class="t" style="left:866px;top:373.5px;margin-top:0.6px;font-size:6.3px;color:#0a0020;-webkit-text-stroke:0.08px #0a0020;transform:scaleX(.93);transform-origin:0 50%;">Use</div>
<div style="position:absolute;left:907.5px;top:371px;width:84.5px;height:11px;border:1px solid #d0d0d0;background:#efefef"></div>
<div style="position:absolute;left:572px;top:563.5px;width:428px;height:15.5px;background:#f3f3f3"></div>
<div style="position:absolute;left:575px;top:565.5px;width:31.5px;height:14px;background:#fff;border-left:1px solid #ddd;border-right:1px solid #ddd"></div>
<div class="t" style="left:580px;top:568px;font-size:6.3px;font-weight:bold;color:#111;transform:scaleX(.86);transform-origin:0 50%;">Analysis</div>
<div class="t" style="left:610px;top:568px;font-size:6.3px;color:#2a1f3a;">Information</div>
<div style="position:absolute;left:646px;top:566px;width:0.8px;height:13px;background:#777"></div>
<div class="t" style="left:650px;top:568px;font-size:6.3px;color:#2a1f3a;">Components</div>
<div style="position:absolute;left:687.5px;top:566px;width:0.8px;height:13px;background:#777"></div>
</body></html>
